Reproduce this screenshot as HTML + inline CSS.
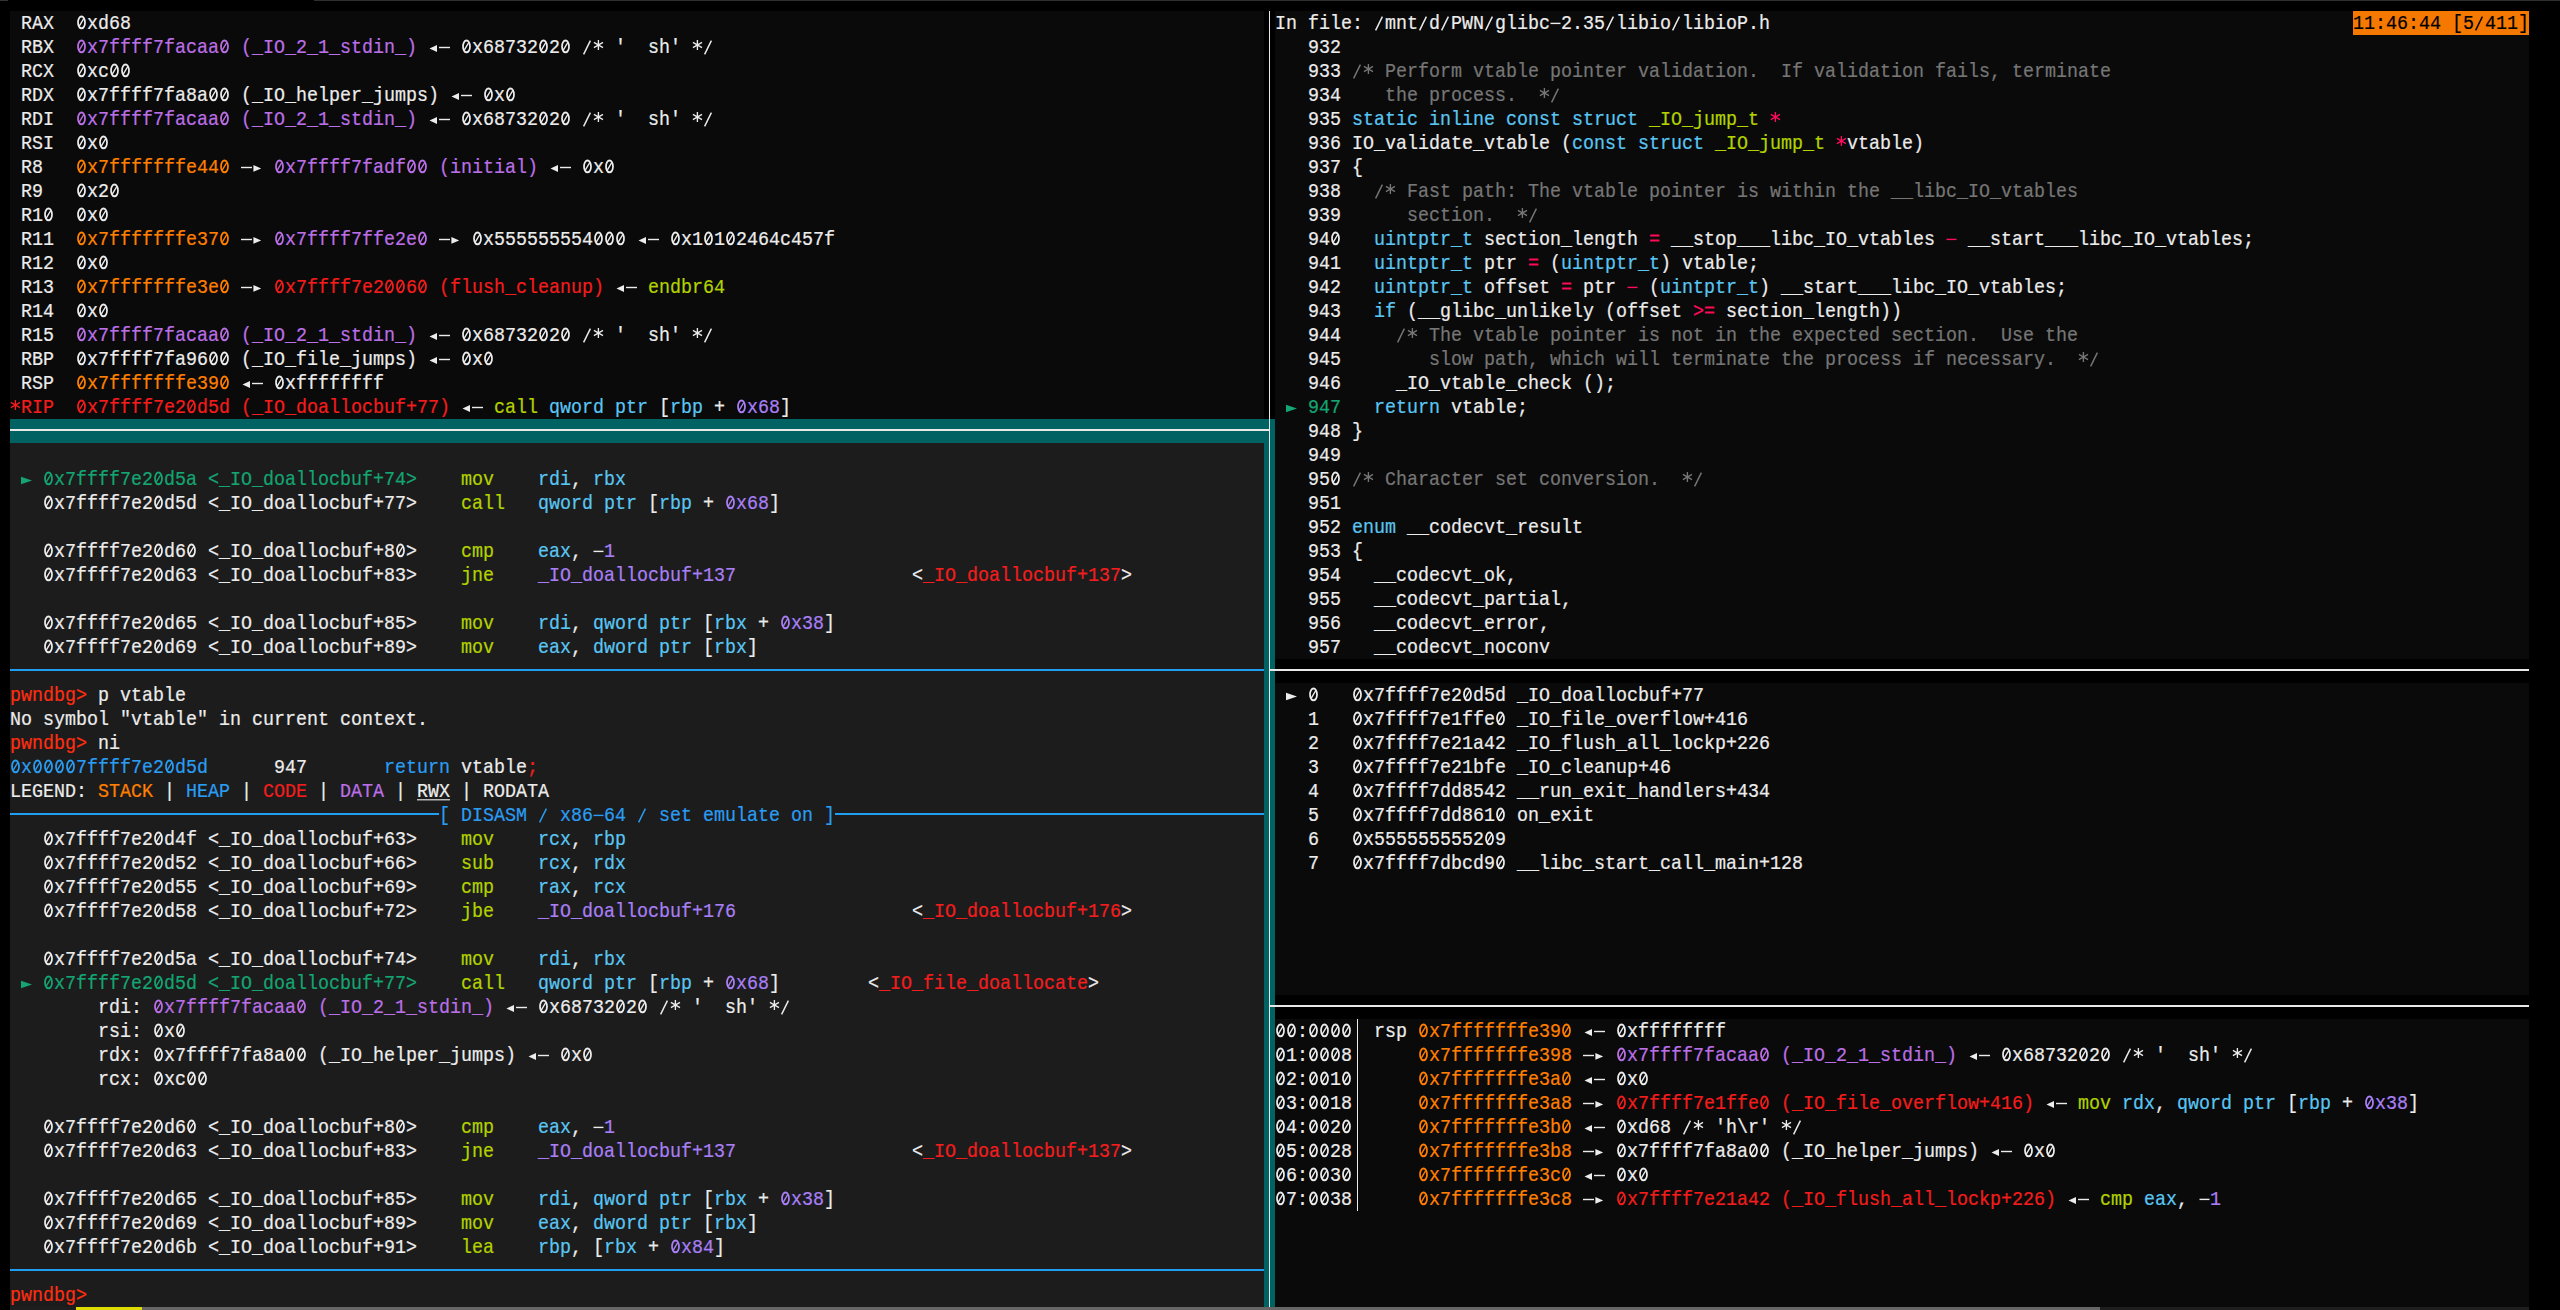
<!DOCTYPE html><html><head><meta charset="utf-8"><style>

*{margin:0;padding:0;box-sizing:border-box}
html,body{width:2560px;height:1310px;overflow:hidden;background:#000}
body{position:relative;font-family:"Liberation Mono",monospace;font-size:18.333px;color:#ececec;-webkit-text-stroke:0.2px currentColor}
.b{position:absolute}
.r{position:absolute;height:24px;line-height:24px;white-space:pre;transform-origin:0 16px;transform:translateY(2px) scaleY(1.12)}
.t{position:relative;top:TOPpx}
.g{display:inline-block;vertical-align:top;fill:currentColor}
.U{text-decoration:underline;text-decoration-thickness:1px;text-underline-offset:2px}
.P{color:#bb6fe6}
.N{color:#a97ff5}
.O{color:#ff7f00}
.R{color:#f41c1c}
.Y{color:#b3d200}
.C{color:#5ac6f2}
.G{color:#14a572}
.B{color:#2a9df2}
.M{color:#767676}
.K{color:#ff0a5e}
.X{color:#ff2d12}
.U{color:#ececec}
.k{color:#000000}

</style></head><body>
<div class="b" style="left:0px;top:0px;width:8px;height:1px;background:#333333;"></div>
<div class="b" style="left:314px;top:0px;width:2246px;height:1px;background:#2f2f2f;"></div>
<div class="b" style="left:10px;top:11px;width:1254px;height:408px;background:#0a0a0a;"></div>
<div class="b" style="left:10px;top:419px;width:1265px;height:24px;background:#006262;"></div>
<div class="b" style="left:1264px;top:419px;width:11px;height:888px;background:#006262;"></div>
<div class="b" style="left:10px;top:443px;width:1254px;height:864px;background:#1c1c1c;"></div>
<div class="b" style="left:1275px;top:11px;width:1254px;height:648px;background:#0a0a0a;"></div>
<div class="b" style="left:1275px;top:683px;width:1254px;height:312px;background:#0a0a0a;"></div>
<div class="b" style="left:1275px;top:1019px;width:1254px;height:288px;background:#0a0a0a;"></div>
<div class="b" style="left:1269px;top:11px;width:1px;height:1296px;background:#e8e8e8;"></div>
<div class="b" style="left:10px;top:429px;width:1260px;height:2px;background:#e8e8e8;"></div>
<div class="b" style="left:1269px;top:669px;width:1260px;height:2px;background:#e8e8e8;"></div>
<div class="b" style="left:1269px;top:1005px;width:1260px;height:2px;background:#e8e8e8;"></div>
<div class="b" style="left:10px;top:669px;width:1254px;height:2px;background:#1f9ff2;"></div>
<div class="b" style="left:10px;top:1269px;width:1254px;height:2px;background:#1f9ff2;"></div>
<div class="b" style="left:10px;top:813px;width:429px;height:2px;background:#1f9ff2;"></div>
<div class="b" style="left:835px;top:813px;width:429px;height:2px;background:#1f9ff2;"></div>
<div class="b" style="left:2353px;top:11px;width:176px;height:24px;background:#f57900;"></div>
<div class="b" style="left:10px;top:1307px;width:66px;height:3px;background:#1e1e1e;"></div>
<div class="b" style="left:76px;top:1307px;width:66px;height:3px;background:#dcdc00;"></div>
<div class="b" style="left:142px;top:1307px;width:1958px;height:3px;background:#666666;"></div>
<div class="b" style="left:2100px;top:1307px;width:429px;height:3px;background:#1e1e1e;"></div>
<div class="r" style="left:10px;top:11px"> RAX  <svg class="g" width="11" height="24" viewBox="0 0 11 24"><ellipse cx="5.5" cy="10.107" rx="3.5" ry="5.312" stroke="currentColor" stroke-width="1.75" fill="none"/><path d="M3.3,13.321 L7.9,6.536" stroke="currentColor" stroke-width="1.3" fill="none"/></svg>xd68</div>
<div class="r" style="left:10px;top:35px"> RBX  <span class="P"><svg class="g" width="11" height="24" viewBox="0 0 11 24"><ellipse cx="5.5" cy="10.107" rx="3.5" ry="5.312" stroke="currentColor" stroke-width="1.75" fill="none"/><path d="M3.3,13.321 L7.9,6.536" stroke="currentColor" stroke-width="1.3" fill="none"/></svg>x7ffff7facaa<svg class="g" width="11" height="24" viewBox="0 0 11 24"><ellipse cx="5.5" cy="10.107" rx="3.5" ry="5.312" stroke="currentColor" stroke-width="1.75" fill="none"/><path d="M3.3,13.321 L7.9,6.536" stroke="currentColor" stroke-width="1.3" fill="none"/></svg> (_IO_2_1_stdin_)</span> <svg class="g" width="11" height="24" viewBox="0 0 11 24"><polygon points="1.5,11.982 9,8.857 9,15.107"/></svg><svg class="g" width="11" height="24" viewBox="0 0 11 24"><rect x="0" y="10.464" width="11" height="1.25"/></svg> <svg class="g" width="11" height="24" viewBox="0 0 11 24"><ellipse cx="5.5" cy="10.107" rx="3.5" ry="5.312" stroke="currentColor" stroke-width="1.75" fill="none"/><path d="M3.3,13.321 L7.9,6.536" stroke="currentColor" stroke-width="1.3" fill="none"/></svg>x68732<svg class="g" width="11" height="24" viewBox="0 0 11 24"><ellipse cx="5.5" cy="10.107" rx="3.5" ry="5.312" stroke="currentColor" stroke-width="1.75" fill="none"/><path d="M3.3,13.321 L7.9,6.536" stroke="currentColor" stroke-width="1.3" fill="none"/></svg>2<svg class="g" width="11" height="24" viewBox="0 0 11 24"><ellipse cx="5.5" cy="10.107" rx="3.5" ry="5.312" stroke="currentColor" stroke-width="1.75" fill="none"/><path d="M3.3,13.321 L7.9,6.536" stroke="currentColor" stroke-width="1.3" fill="none"/></svg> <svg class="g" width="11" height="24" viewBox="0 0 11 24"><path d="M1.6,17.25 L8.4,4.929" stroke="currentColor" stroke-width="1.5" fill="none"/></svg><svg class="g" width="11" height="24" viewBox="0 0 11 24"><path d="M5.4,4.393 V13.321 M0.9,6.446 L10,11.179 M0.9,11.179 L10,6.446" stroke="currentColor" stroke-width="1.35" fill="none"/></svg> '  sh' <svg class="g" width="11" height="24" viewBox="0 0 11 24"><path d="M5.4,4.393 V13.321 M0.9,6.446 L10,11.179 M0.9,11.179 L10,6.446" stroke="currentColor" stroke-width="1.35" fill="none"/></svg><svg class="g" width="11" height="24" viewBox="0 0 11 24"><path d="M1.6,17.25 L8.4,4.929" stroke="currentColor" stroke-width="1.5" fill="none"/></svg></div>
<div class="r" style="left:10px;top:59px"> RCX  <svg class="g" width="11" height="24" viewBox="0 0 11 24"><ellipse cx="5.5" cy="10.107" rx="3.5" ry="5.312" stroke="currentColor" stroke-width="1.75" fill="none"/><path d="M3.3,13.321 L7.9,6.536" stroke="currentColor" stroke-width="1.3" fill="none"/></svg>xc<svg class="g" width="11" height="24" viewBox="0 0 11 24"><ellipse cx="5.5" cy="10.107" rx="3.5" ry="5.312" stroke="currentColor" stroke-width="1.75" fill="none"/><path d="M3.3,13.321 L7.9,6.536" stroke="currentColor" stroke-width="1.3" fill="none"/></svg><svg class="g" width="11" height="24" viewBox="0 0 11 24"><ellipse cx="5.5" cy="10.107" rx="3.5" ry="5.312" stroke="currentColor" stroke-width="1.75" fill="none"/><path d="M3.3,13.321 L7.9,6.536" stroke="currentColor" stroke-width="1.3" fill="none"/></svg></div>
<div class="r" style="left:10px;top:83px"> RDX  <svg class="g" width="11" height="24" viewBox="0 0 11 24"><ellipse cx="5.5" cy="10.107" rx="3.5" ry="5.312" stroke="currentColor" stroke-width="1.75" fill="none"/><path d="M3.3,13.321 L7.9,6.536" stroke="currentColor" stroke-width="1.3" fill="none"/></svg>x7ffff7fa8a<svg class="g" width="11" height="24" viewBox="0 0 11 24"><ellipse cx="5.5" cy="10.107" rx="3.5" ry="5.312" stroke="currentColor" stroke-width="1.75" fill="none"/><path d="M3.3,13.321 L7.9,6.536" stroke="currentColor" stroke-width="1.3" fill="none"/></svg><svg class="g" width="11" height="24" viewBox="0 0 11 24"><ellipse cx="5.5" cy="10.107" rx="3.5" ry="5.312" stroke="currentColor" stroke-width="1.75" fill="none"/><path d="M3.3,13.321 L7.9,6.536" stroke="currentColor" stroke-width="1.3" fill="none"/></svg> (_IO_helper_jumps) <svg class="g" width="11" height="24" viewBox="0 0 11 24"><polygon points="1.5,11.982 9,8.857 9,15.107"/></svg><svg class="g" width="11" height="24" viewBox="0 0 11 24"><rect x="0" y="10.464" width="11" height="1.25"/></svg> <svg class="g" width="11" height="24" viewBox="0 0 11 24"><ellipse cx="5.5" cy="10.107" rx="3.5" ry="5.312" stroke="currentColor" stroke-width="1.75" fill="none"/><path d="M3.3,13.321 L7.9,6.536" stroke="currentColor" stroke-width="1.3" fill="none"/></svg>x<svg class="g" width="11" height="24" viewBox="0 0 11 24"><ellipse cx="5.5" cy="10.107" rx="3.5" ry="5.312" stroke="currentColor" stroke-width="1.75" fill="none"/><path d="M3.3,13.321 L7.9,6.536" stroke="currentColor" stroke-width="1.3" fill="none"/></svg></div>
<div class="r" style="left:10px;top:107px"> RDI  <span class="P"><svg class="g" width="11" height="24" viewBox="0 0 11 24"><ellipse cx="5.5" cy="10.107" rx="3.5" ry="5.312" stroke="currentColor" stroke-width="1.75" fill="none"/><path d="M3.3,13.321 L7.9,6.536" stroke="currentColor" stroke-width="1.3" fill="none"/></svg>x7ffff7facaa<svg class="g" width="11" height="24" viewBox="0 0 11 24"><ellipse cx="5.5" cy="10.107" rx="3.5" ry="5.312" stroke="currentColor" stroke-width="1.75" fill="none"/><path d="M3.3,13.321 L7.9,6.536" stroke="currentColor" stroke-width="1.3" fill="none"/></svg> (_IO_2_1_stdin_)</span> <svg class="g" width="11" height="24" viewBox="0 0 11 24"><polygon points="1.5,11.982 9,8.857 9,15.107"/></svg><svg class="g" width="11" height="24" viewBox="0 0 11 24"><rect x="0" y="10.464" width="11" height="1.25"/></svg> <svg class="g" width="11" height="24" viewBox="0 0 11 24"><ellipse cx="5.5" cy="10.107" rx="3.5" ry="5.312" stroke="currentColor" stroke-width="1.75" fill="none"/><path d="M3.3,13.321 L7.9,6.536" stroke="currentColor" stroke-width="1.3" fill="none"/></svg>x68732<svg class="g" width="11" height="24" viewBox="0 0 11 24"><ellipse cx="5.5" cy="10.107" rx="3.5" ry="5.312" stroke="currentColor" stroke-width="1.75" fill="none"/><path d="M3.3,13.321 L7.9,6.536" stroke="currentColor" stroke-width="1.3" fill="none"/></svg>2<svg class="g" width="11" height="24" viewBox="0 0 11 24"><ellipse cx="5.5" cy="10.107" rx="3.5" ry="5.312" stroke="currentColor" stroke-width="1.75" fill="none"/><path d="M3.3,13.321 L7.9,6.536" stroke="currentColor" stroke-width="1.3" fill="none"/></svg> <svg class="g" width="11" height="24" viewBox="0 0 11 24"><path d="M1.6,17.25 L8.4,4.929" stroke="currentColor" stroke-width="1.5" fill="none"/></svg><svg class="g" width="11" height="24" viewBox="0 0 11 24"><path d="M5.4,4.393 V13.321 M0.9,6.446 L10,11.179 M0.9,11.179 L10,6.446" stroke="currentColor" stroke-width="1.35" fill="none"/></svg> '  sh' <svg class="g" width="11" height="24" viewBox="0 0 11 24"><path d="M5.4,4.393 V13.321 M0.9,6.446 L10,11.179 M0.9,11.179 L10,6.446" stroke="currentColor" stroke-width="1.35" fill="none"/></svg><svg class="g" width="11" height="24" viewBox="0 0 11 24"><path d="M1.6,17.25 L8.4,4.929" stroke="currentColor" stroke-width="1.5" fill="none"/></svg></div>
<div class="r" style="left:10px;top:131px"> RSI  <svg class="g" width="11" height="24" viewBox="0 0 11 24"><ellipse cx="5.5" cy="10.107" rx="3.5" ry="5.312" stroke="currentColor" stroke-width="1.75" fill="none"/><path d="M3.3,13.321 L7.9,6.536" stroke="currentColor" stroke-width="1.3" fill="none"/></svg>x<svg class="g" width="11" height="24" viewBox="0 0 11 24"><ellipse cx="5.5" cy="10.107" rx="3.5" ry="5.312" stroke="currentColor" stroke-width="1.75" fill="none"/><path d="M3.3,13.321 L7.9,6.536" stroke="currentColor" stroke-width="1.3" fill="none"/></svg></div>
<div class="r" style="left:10px;top:155px"> R8   <span class="O"><svg class="g" width="11" height="24" viewBox="0 0 11 24"><ellipse cx="5.5" cy="10.107" rx="3.5" ry="5.312" stroke="currentColor" stroke-width="1.75" fill="none"/><path d="M3.3,13.321 L7.9,6.536" stroke="currentColor" stroke-width="1.3" fill="none"/></svg>x7fffffffe44<svg class="g" width="11" height="24" viewBox="0 0 11 24"><ellipse cx="5.5" cy="10.107" rx="3.5" ry="5.312" stroke="currentColor" stroke-width="1.75" fill="none"/><path d="M3.3,13.321 L7.9,6.536" stroke="currentColor" stroke-width="1.3" fill="none"/></svg></span> <svg class="g" width="11" height="24" viewBox="0 0 11 24"><rect x="0" y="10.464" width="11" height="1.25"/></svg><svg class="g" width="11" height="24" viewBox="0 0 11 24"><polygon points="1.4,8.857 9.2,11.893 1.4,14.929"/></svg> <span class="P"><svg class="g" width="11" height="24" viewBox="0 0 11 24"><ellipse cx="5.5" cy="10.107" rx="3.5" ry="5.312" stroke="currentColor" stroke-width="1.75" fill="none"/><path d="M3.3,13.321 L7.9,6.536" stroke="currentColor" stroke-width="1.3" fill="none"/></svg>x7ffff7fadf<svg class="g" width="11" height="24" viewBox="0 0 11 24"><ellipse cx="5.5" cy="10.107" rx="3.5" ry="5.312" stroke="currentColor" stroke-width="1.75" fill="none"/><path d="M3.3,13.321 L7.9,6.536" stroke="currentColor" stroke-width="1.3" fill="none"/></svg><svg class="g" width="11" height="24" viewBox="0 0 11 24"><ellipse cx="5.5" cy="10.107" rx="3.5" ry="5.312" stroke="currentColor" stroke-width="1.75" fill="none"/><path d="M3.3,13.321 L7.9,6.536" stroke="currentColor" stroke-width="1.3" fill="none"/></svg> (initial)</span> <svg class="g" width="11" height="24" viewBox="0 0 11 24"><polygon points="1.5,11.982 9,8.857 9,15.107"/></svg><svg class="g" width="11" height="24" viewBox="0 0 11 24"><rect x="0" y="10.464" width="11" height="1.25"/></svg> <svg class="g" width="11" height="24" viewBox="0 0 11 24"><ellipse cx="5.5" cy="10.107" rx="3.5" ry="5.312" stroke="currentColor" stroke-width="1.75" fill="none"/><path d="M3.3,13.321 L7.9,6.536" stroke="currentColor" stroke-width="1.3" fill="none"/></svg>x<svg class="g" width="11" height="24" viewBox="0 0 11 24"><ellipse cx="5.5" cy="10.107" rx="3.5" ry="5.312" stroke="currentColor" stroke-width="1.75" fill="none"/><path d="M3.3,13.321 L7.9,6.536" stroke="currentColor" stroke-width="1.3" fill="none"/></svg></div>
<div class="r" style="left:10px;top:179px"> R9   <svg class="g" width="11" height="24" viewBox="0 0 11 24"><ellipse cx="5.5" cy="10.107" rx="3.5" ry="5.312" stroke="currentColor" stroke-width="1.75" fill="none"/><path d="M3.3,13.321 L7.9,6.536" stroke="currentColor" stroke-width="1.3" fill="none"/></svg>x2<svg class="g" width="11" height="24" viewBox="0 0 11 24"><ellipse cx="5.5" cy="10.107" rx="3.5" ry="5.312" stroke="currentColor" stroke-width="1.75" fill="none"/><path d="M3.3,13.321 L7.9,6.536" stroke="currentColor" stroke-width="1.3" fill="none"/></svg></div>
<div class="r" style="left:10px;top:203px"> R1<svg class="g" width="11" height="24" viewBox="0 0 11 24"><ellipse cx="5.5" cy="10.107" rx="3.5" ry="5.312" stroke="currentColor" stroke-width="1.75" fill="none"/><path d="M3.3,13.321 L7.9,6.536" stroke="currentColor" stroke-width="1.3" fill="none"/></svg>  <svg class="g" width="11" height="24" viewBox="0 0 11 24"><ellipse cx="5.5" cy="10.107" rx="3.5" ry="5.312" stroke="currentColor" stroke-width="1.75" fill="none"/><path d="M3.3,13.321 L7.9,6.536" stroke="currentColor" stroke-width="1.3" fill="none"/></svg>x<svg class="g" width="11" height="24" viewBox="0 0 11 24"><ellipse cx="5.5" cy="10.107" rx="3.5" ry="5.312" stroke="currentColor" stroke-width="1.75" fill="none"/><path d="M3.3,13.321 L7.9,6.536" stroke="currentColor" stroke-width="1.3" fill="none"/></svg></div>
<div class="r" style="left:10px;top:227px"> R11  <span class="O"><svg class="g" width="11" height="24" viewBox="0 0 11 24"><ellipse cx="5.5" cy="10.107" rx="3.5" ry="5.312" stroke="currentColor" stroke-width="1.75" fill="none"/><path d="M3.3,13.321 L7.9,6.536" stroke="currentColor" stroke-width="1.3" fill="none"/></svg>x7fffffffe37<svg class="g" width="11" height="24" viewBox="0 0 11 24"><ellipse cx="5.5" cy="10.107" rx="3.5" ry="5.312" stroke="currentColor" stroke-width="1.75" fill="none"/><path d="M3.3,13.321 L7.9,6.536" stroke="currentColor" stroke-width="1.3" fill="none"/></svg></span> <svg class="g" width="11" height="24" viewBox="0 0 11 24"><rect x="0" y="10.464" width="11" height="1.25"/></svg><svg class="g" width="11" height="24" viewBox="0 0 11 24"><polygon points="1.4,8.857 9.2,11.893 1.4,14.929"/></svg> <span class="P"><svg class="g" width="11" height="24" viewBox="0 0 11 24"><ellipse cx="5.5" cy="10.107" rx="3.5" ry="5.312" stroke="currentColor" stroke-width="1.75" fill="none"/><path d="M3.3,13.321 L7.9,6.536" stroke="currentColor" stroke-width="1.3" fill="none"/></svg>x7ffff7ffe2e<svg class="g" width="11" height="24" viewBox="0 0 11 24"><ellipse cx="5.5" cy="10.107" rx="3.5" ry="5.312" stroke="currentColor" stroke-width="1.75" fill="none"/><path d="M3.3,13.321 L7.9,6.536" stroke="currentColor" stroke-width="1.3" fill="none"/></svg></span> <svg class="g" width="11" height="24" viewBox="0 0 11 24"><rect x="0" y="10.464" width="11" height="1.25"/></svg><svg class="g" width="11" height="24" viewBox="0 0 11 24"><polygon points="1.4,8.857 9.2,11.893 1.4,14.929"/></svg> <svg class="g" width="11" height="24" viewBox="0 0 11 24"><ellipse cx="5.5" cy="10.107" rx="3.5" ry="5.312" stroke="currentColor" stroke-width="1.75" fill="none"/><path d="M3.3,13.321 L7.9,6.536" stroke="currentColor" stroke-width="1.3" fill="none"/></svg>x555555554<svg class="g" width="11" height="24" viewBox="0 0 11 24"><ellipse cx="5.5" cy="10.107" rx="3.5" ry="5.312" stroke="currentColor" stroke-width="1.75" fill="none"/><path d="M3.3,13.321 L7.9,6.536" stroke="currentColor" stroke-width="1.3" fill="none"/></svg><svg class="g" width="11" height="24" viewBox="0 0 11 24"><ellipse cx="5.5" cy="10.107" rx="3.5" ry="5.312" stroke="currentColor" stroke-width="1.75" fill="none"/><path d="M3.3,13.321 L7.9,6.536" stroke="currentColor" stroke-width="1.3" fill="none"/></svg><svg class="g" width="11" height="24" viewBox="0 0 11 24"><ellipse cx="5.5" cy="10.107" rx="3.5" ry="5.312" stroke="currentColor" stroke-width="1.75" fill="none"/><path d="M3.3,13.321 L7.9,6.536" stroke="currentColor" stroke-width="1.3" fill="none"/></svg> <svg class="g" width="11" height="24" viewBox="0 0 11 24"><polygon points="1.5,11.982 9,8.857 9,15.107"/></svg><svg class="g" width="11" height="24" viewBox="0 0 11 24"><rect x="0" y="10.464" width="11" height="1.25"/></svg> <svg class="g" width="11" height="24" viewBox="0 0 11 24"><ellipse cx="5.5" cy="10.107" rx="3.5" ry="5.312" stroke="currentColor" stroke-width="1.75" fill="none"/><path d="M3.3,13.321 L7.9,6.536" stroke="currentColor" stroke-width="1.3" fill="none"/></svg>x1<svg class="g" width="11" height="24" viewBox="0 0 11 24"><ellipse cx="5.5" cy="10.107" rx="3.5" ry="5.312" stroke="currentColor" stroke-width="1.75" fill="none"/><path d="M3.3,13.321 L7.9,6.536" stroke="currentColor" stroke-width="1.3" fill="none"/></svg>1<svg class="g" width="11" height="24" viewBox="0 0 11 24"><ellipse cx="5.5" cy="10.107" rx="3.5" ry="5.312" stroke="currentColor" stroke-width="1.75" fill="none"/><path d="M3.3,13.321 L7.9,6.536" stroke="currentColor" stroke-width="1.3" fill="none"/></svg>2464c457f</div>
<div class="r" style="left:10px;top:251px"> R12  <svg class="g" width="11" height="24" viewBox="0 0 11 24"><ellipse cx="5.5" cy="10.107" rx="3.5" ry="5.312" stroke="currentColor" stroke-width="1.75" fill="none"/><path d="M3.3,13.321 L7.9,6.536" stroke="currentColor" stroke-width="1.3" fill="none"/></svg>x<svg class="g" width="11" height="24" viewBox="0 0 11 24"><ellipse cx="5.5" cy="10.107" rx="3.5" ry="5.312" stroke="currentColor" stroke-width="1.75" fill="none"/><path d="M3.3,13.321 L7.9,6.536" stroke="currentColor" stroke-width="1.3" fill="none"/></svg></div>
<div class="r" style="left:10px;top:275px"> R13  <span class="O"><svg class="g" width="11" height="24" viewBox="0 0 11 24"><ellipse cx="5.5" cy="10.107" rx="3.5" ry="5.312" stroke="currentColor" stroke-width="1.75" fill="none"/><path d="M3.3,13.321 L7.9,6.536" stroke="currentColor" stroke-width="1.3" fill="none"/></svg>x7fffffffe3e<svg class="g" width="11" height="24" viewBox="0 0 11 24"><ellipse cx="5.5" cy="10.107" rx="3.5" ry="5.312" stroke="currentColor" stroke-width="1.75" fill="none"/><path d="M3.3,13.321 L7.9,6.536" stroke="currentColor" stroke-width="1.3" fill="none"/></svg></span> <svg class="g" width="11" height="24" viewBox="0 0 11 24"><rect x="0" y="10.464" width="11" height="1.25"/></svg><svg class="g" width="11" height="24" viewBox="0 0 11 24"><polygon points="1.4,8.857 9.2,11.893 1.4,14.929"/></svg> <span class="R"><svg class="g" width="11" height="24" viewBox="0 0 11 24"><ellipse cx="5.5" cy="10.107" rx="3.5" ry="5.312" stroke="currentColor" stroke-width="1.75" fill="none"/><path d="M3.3,13.321 L7.9,6.536" stroke="currentColor" stroke-width="1.3" fill="none"/></svg>x7ffff7e2<svg class="g" width="11" height="24" viewBox="0 0 11 24"><ellipse cx="5.5" cy="10.107" rx="3.5" ry="5.312" stroke="currentColor" stroke-width="1.75" fill="none"/><path d="M3.3,13.321 L7.9,6.536" stroke="currentColor" stroke-width="1.3" fill="none"/></svg><svg class="g" width="11" height="24" viewBox="0 0 11 24"><ellipse cx="5.5" cy="10.107" rx="3.5" ry="5.312" stroke="currentColor" stroke-width="1.75" fill="none"/><path d="M3.3,13.321 L7.9,6.536" stroke="currentColor" stroke-width="1.3" fill="none"/></svg>6<svg class="g" width="11" height="24" viewBox="0 0 11 24"><ellipse cx="5.5" cy="10.107" rx="3.5" ry="5.312" stroke="currentColor" stroke-width="1.75" fill="none"/><path d="M3.3,13.321 L7.9,6.536" stroke="currentColor" stroke-width="1.3" fill="none"/></svg> (flush_cleanup)</span> <svg class="g" width="11" height="24" viewBox="0 0 11 24"><polygon points="1.5,11.982 9,8.857 9,15.107"/></svg><svg class="g" width="11" height="24" viewBox="0 0 11 24"><rect x="0" y="10.464" width="11" height="1.25"/></svg> <span class="Y">endbr64</span></div>
<div class="r" style="left:10px;top:299px"> R14  <svg class="g" width="11" height="24" viewBox="0 0 11 24"><ellipse cx="5.5" cy="10.107" rx="3.5" ry="5.312" stroke="currentColor" stroke-width="1.75" fill="none"/><path d="M3.3,13.321 L7.9,6.536" stroke="currentColor" stroke-width="1.3" fill="none"/></svg>x<svg class="g" width="11" height="24" viewBox="0 0 11 24"><ellipse cx="5.5" cy="10.107" rx="3.5" ry="5.312" stroke="currentColor" stroke-width="1.75" fill="none"/><path d="M3.3,13.321 L7.9,6.536" stroke="currentColor" stroke-width="1.3" fill="none"/></svg></div>
<div class="r" style="left:10px;top:323px"> R15  <span class="P"><svg class="g" width="11" height="24" viewBox="0 0 11 24"><ellipse cx="5.5" cy="10.107" rx="3.5" ry="5.312" stroke="currentColor" stroke-width="1.75" fill="none"/><path d="M3.3,13.321 L7.9,6.536" stroke="currentColor" stroke-width="1.3" fill="none"/></svg>x7ffff7facaa<svg class="g" width="11" height="24" viewBox="0 0 11 24"><ellipse cx="5.5" cy="10.107" rx="3.5" ry="5.312" stroke="currentColor" stroke-width="1.75" fill="none"/><path d="M3.3,13.321 L7.9,6.536" stroke="currentColor" stroke-width="1.3" fill="none"/></svg> (_IO_2_1_stdin_)</span> <svg class="g" width="11" height="24" viewBox="0 0 11 24"><polygon points="1.5,11.982 9,8.857 9,15.107"/></svg><svg class="g" width="11" height="24" viewBox="0 0 11 24"><rect x="0" y="10.464" width="11" height="1.25"/></svg> <svg class="g" width="11" height="24" viewBox="0 0 11 24"><ellipse cx="5.5" cy="10.107" rx="3.5" ry="5.312" stroke="currentColor" stroke-width="1.75" fill="none"/><path d="M3.3,13.321 L7.9,6.536" stroke="currentColor" stroke-width="1.3" fill="none"/></svg>x68732<svg class="g" width="11" height="24" viewBox="0 0 11 24"><ellipse cx="5.5" cy="10.107" rx="3.5" ry="5.312" stroke="currentColor" stroke-width="1.75" fill="none"/><path d="M3.3,13.321 L7.9,6.536" stroke="currentColor" stroke-width="1.3" fill="none"/></svg>2<svg class="g" width="11" height="24" viewBox="0 0 11 24"><ellipse cx="5.5" cy="10.107" rx="3.5" ry="5.312" stroke="currentColor" stroke-width="1.75" fill="none"/><path d="M3.3,13.321 L7.9,6.536" stroke="currentColor" stroke-width="1.3" fill="none"/></svg> <svg class="g" width="11" height="24" viewBox="0 0 11 24"><path d="M1.6,17.25 L8.4,4.929" stroke="currentColor" stroke-width="1.5" fill="none"/></svg><svg class="g" width="11" height="24" viewBox="0 0 11 24"><path d="M5.4,4.393 V13.321 M0.9,6.446 L10,11.179 M0.9,11.179 L10,6.446" stroke="currentColor" stroke-width="1.35" fill="none"/></svg> '  sh' <svg class="g" width="11" height="24" viewBox="0 0 11 24"><path d="M5.4,4.393 V13.321 M0.9,6.446 L10,11.179 M0.9,11.179 L10,6.446" stroke="currentColor" stroke-width="1.35" fill="none"/></svg><svg class="g" width="11" height="24" viewBox="0 0 11 24"><path d="M1.6,17.25 L8.4,4.929" stroke="currentColor" stroke-width="1.5" fill="none"/></svg></div>
<div class="r" style="left:10px;top:347px"> RBP  <svg class="g" width="11" height="24" viewBox="0 0 11 24"><ellipse cx="5.5" cy="10.107" rx="3.5" ry="5.312" stroke="currentColor" stroke-width="1.75" fill="none"/><path d="M3.3,13.321 L7.9,6.536" stroke="currentColor" stroke-width="1.3" fill="none"/></svg>x7ffff7fa96<svg class="g" width="11" height="24" viewBox="0 0 11 24"><ellipse cx="5.5" cy="10.107" rx="3.5" ry="5.312" stroke="currentColor" stroke-width="1.75" fill="none"/><path d="M3.3,13.321 L7.9,6.536" stroke="currentColor" stroke-width="1.3" fill="none"/></svg><svg class="g" width="11" height="24" viewBox="0 0 11 24"><ellipse cx="5.5" cy="10.107" rx="3.5" ry="5.312" stroke="currentColor" stroke-width="1.75" fill="none"/><path d="M3.3,13.321 L7.9,6.536" stroke="currentColor" stroke-width="1.3" fill="none"/></svg> (_IO_file_jumps) <svg class="g" width="11" height="24" viewBox="0 0 11 24"><polygon points="1.5,11.982 9,8.857 9,15.107"/></svg><svg class="g" width="11" height="24" viewBox="0 0 11 24"><rect x="0" y="10.464" width="11" height="1.25"/></svg> <svg class="g" width="11" height="24" viewBox="0 0 11 24"><ellipse cx="5.5" cy="10.107" rx="3.5" ry="5.312" stroke="currentColor" stroke-width="1.75" fill="none"/><path d="M3.3,13.321 L7.9,6.536" stroke="currentColor" stroke-width="1.3" fill="none"/></svg>x<svg class="g" width="11" height="24" viewBox="0 0 11 24"><ellipse cx="5.5" cy="10.107" rx="3.5" ry="5.312" stroke="currentColor" stroke-width="1.75" fill="none"/><path d="M3.3,13.321 L7.9,6.536" stroke="currentColor" stroke-width="1.3" fill="none"/></svg></div>
<div class="r" style="left:10px;top:371px"> RSP  <span class="O"><svg class="g" width="11" height="24" viewBox="0 0 11 24"><ellipse cx="5.5" cy="10.107" rx="3.5" ry="5.312" stroke="currentColor" stroke-width="1.75" fill="none"/><path d="M3.3,13.321 L7.9,6.536" stroke="currentColor" stroke-width="1.3" fill="none"/></svg>x7fffffffe39<svg class="g" width="11" height="24" viewBox="0 0 11 24"><ellipse cx="5.5" cy="10.107" rx="3.5" ry="5.312" stroke="currentColor" stroke-width="1.75" fill="none"/><path d="M3.3,13.321 L7.9,6.536" stroke="currentColor" stroke-width="1.3" fill="none"/></svg></span> <svg class="g" width="11" height="24" viewBox="0 0 11 24"><polygon points="1.5,11.982 9,8.857 9,15.107"/></svg><svg class="g" width="11" height="24" viewBox="0 0 11 24"><rect x="0" y="10.464" width="11" height="1.25"/></svg> <svg class="g" width="11" height="24" viewBox="0 0 11 24"><ellipse cx="5.5" cy="10.107" rx="3.5" ry="5.312" stroke="currentColor" stroke-width="1.75" fill="none"/><path d="M3.3,13.321 L7.9,6.536" stroke="currentColor" stroke-width="1.3" fill="none"/></svg>xffffffff</div>
<div class="r" style="left:10px;top:395px"><span class="R"><svg class="g" width="11" height="24" viewBox="0 0 11 24"><path d="M5.4,4.393 V13.321 M0.9,6.446 L10,11.179 M0.9,11.179 L10,6.446" stroke="currentColor" stroke-width="1.35" fill="none"/></svg>RIP</span>  <span class="R"><svg class="g" width="11" height="24" viewBox="0 0 11 24"><ellipse cx="5.5" cy="10.107" rx="3.5" ry="5.312" stroke="currentColor" stroke-width="1.75" fill="none"/><path d="M3.3,13.321 L7.9,6.536" stroke="currentColor" stroke-width="1.3" fill="none"/></svg>x7ffff7e2<svg class="g" width="11" height="24" viewBox="0 0 11 24"><ellipse cx="5.5" cy="10.107" rx="3.5" ry="5.312" stroke="currentColor" stroke-width="1.75" fill="none"/><path d="M3.3,13.321 L7.9,6.536" stroke="currentColor" stroke-width="1.3" fill="none"/></svg>d5d (_IO_doallocbuf+77)</span> <svg class="g" width="11" height="24" viewBox="0 0 11 24"><polygon points="1.5,11.982 9,8.857 9,15.107"/></svg><svg class="g" width="11" height="24" viewBox="0 0 11 24"><rect x="0" y="10.464" width="11" height="1.25"/></svg> <span class="Y">call</span> <span class="C">qword ptr</span> [<span class="C">rbp</span> + <span class="N"><svg class="g" width="11" height="24" viewBox="0 0 11 24"><ellipse cx="5.5" cy="10.107" rx="3.5" ry="5.312" stroke="currentColor" stroke-width="1.75" fill="none"/><path d="M3.3,13.321 L7.9,6.536" stroke="currentColor" stroke-width="1.3" fill="none"/></svg>x68</span>]</div>
<div class="r" style="left:10px;top:467px"> <span class="G"><svg class="g" width="11" height="24" viewBox="0 0 11 24"><polygon points="0,8.679 11,11.982 0,15.286"/></svg> <svg class="g" width="11" height="24" viewBox="0 0 11 24"><ellipse cx="5.5" cy="10.107" rx="3.5" ry="5.312" stroke="currentColor" stroke-width="1.75" fill="none"/><path d="M3.3,13.321 L7.9,6.536" stroke="currentColor" stroke-width="1.3" fill="none"/></svg>x7ffff7e2<svg class="g" width="11" height="24" viewBox="0 0 11 24"><ellipse cx="5.5" cy="10.107" rx="3.5" ry="5.312" stroke="currentColor" stroke-width="1.75" fill="none"/><path d="M3.3,13.321 L7.9,6.536" stroke="currentColor" stroke-width="1.3" fill="none"/></svg>d5a &lt;_IO_doallocbuf+74&gt;</span>    <span class="Y">mov</span>    <span class="C">rdi</span>, <span class="C">rbx</span></div>
<div class="r" style="left:10px;top:491px">   <svg class="g" width="11" height="24" viewBox="0 0 11 24"><ellipse cx="5.5" cy="10.107" rx="3.5" ry="5.312" stroke="currentColor" stroke-width="1.75" fill="none"/><path d="M3.3,13.321 L7.9,6.536" stroke="currentColor" stroke-width="1.3" fill="none"/></svg>x7ffff7e2<svg class="g" width="11" height="24" viewBox="0 0 11 24"><ellipse cx="5.5" cy="10.107" rx="3.5" ry="5.312" stroke="currentColor" stroke-width="1.75" fill="none"/><path d="M3.3,13.321 L7.9,6.536" stroke="currentColor" stroke-width="1.3" fill="none"/></svg>d5d &lt;_IO_doallocbuf+77&gt;    <span class="Y">call</span>   <span class="C">qword ptr</span> [<span class="C">rbp</span> + <span class="N"><svg class="g" width="11" height="24" viewBox="0 0 11 24"><ellipse cx="5.5" cy="10.107" rx="3.5" ry="5.312" stroke="currentColor" stroke-width="1.75" fill="none"/><path d="M3.3,13.321 L7.9,6.536" stroke="currentColor" stroke-width="1.3" fill="none"/></svg>x68</span>]</div>
<div class="r" style="left:10px;top:539px">   <svg class="g" width="11" height="24" viewBox="0 0 11 24"><ellipse cx="5.5" cy="10.107" rx="3.5" ry="5.312" stroke="currentColor" stroke-width="1.75" fill="none"/><path d="M3.3,13.321 L7.9,6.536" stroke="currentColor" stroke-width="1.3" fill="none"/></svg>x7ffff7e2<svg class="g" width="11" height="24" viewBox="0 0 11 24"><ellipse cx="5.5" cy="10.107" rx="3.5" ry="5.312" stroke="currentColor" stroke-width="1.75" fill="none"/><path d="M3.3,13.321 L7.9,6.536" stroke="currentColor" stroke-width="1.3" fill="none"/></svg>d6<svg class="g" width="11" height="24" viewBox="0 0 11 24"><ellipse cx="5.5" cy="10.107" rx="3.5" ry="5.312" stroke="currentColor" stroke-width="1.75" fill="none"/><path d="M3.3,13.321 L7.9,6.536" stroke="currentColor" stroke-width="1.3" fill="none"/></svg> &lt;_IO_doallocbuf+8<svg class="g" width="11" height="24" viewBox="0 0 11 24"><ellipse cx="5.5" cy="10.107" rx="3.5" ry="5.312" stroke="currentColor" stroke-width="1.75" fill="none"/><path d="M3.3,13.321 L7.9,6.536" stroke="currentColor" stroke-width="1.3" fill="none"/></svg>&gt;    <span class="Y">cmp</span>    <span class="C">eax</span>, <svg class="g" width="11" height="24" viewBox="0 0 11 24"><rect x="0.5" y="10.375" width="10" height="1.25"/></svg><span class="N">1</span></div>
<div class="r" style="left:10px;top:563px">   <svg class="g" width="11" height="24" viewBox="0 0 11 24"><ellipse cx="5.5" cy="10.107" rx="3.5" ry="5.312" stroke="currentColor" stroke-width="1.75" fill="none"/><path d="M3.3,13.321 L7.9,6.536" stroke="currentColor" stroke-width="1.3" fill="none"/></svg>x7ffff7e2<svg class="g" width="11" height="24" viewBox="0 0 11 24"><ellipse cx="5.5" cy="10.107" rx="3.5" ry="5.312" stroke="currentColor" stroke-width="1.75" fill="none"/><path d="M3.3,13.321 L7.9,6.536" stroke="currentColor" stroke-width="1.3" fill="none"/></svg>d63 &lt;_IO_doallocbuf+83&gt;    <span class="Y">jne</span>    <span class="N">_IO_doallocbuf+137</span>                &lt;<span class="R">_IO_doallocbuf+137</span>&gt;</div>
<div class="r" style="left:10px;top:611px">   <svg class="g" width="11" height="24" viewBox="0 0 11 24"><ellipse cx="5.5" cy="10.107" rx="3.5" ry="5.312" stroke="currentColor" stroke-width="1.75" fill="none"/><path d="M3.3,13.321 L7.9,6.536" stroke="currentColor" stroke-width="1.3" fill="none"/></svg>x7ffff7e2<svg class="g" width="11" height="24" viewBox="0 0 11 24"><ellipse cx="5.5" cy="10.107" rx="3.5" ry="5.312" stroke="currentColor" stroke-width="1.75" fill="none"/><path d="M3.3,13.321 L7.9,6.536" stroke="currentColor" stroke-width="1.3" fill="none"/></svg>d65 &lt;_IO_doallocbuf+85&gt;    <span class="Y">mov</span>    <span class="C">rdi</span>, <span class="C">qword ptr</span> [<span class="C">rbx</span> + <span class="N"><svg class="g" width="11" height="24" viewBox="0 0 11 24"><ellipse cx="5.5" cy="10.107" rx="3.5" ry="5.312" stroke="currentColor" stroke-width="1.75" fill="none"/><path d="M3.3,13.321 L7.9,6.536" stroke="currentColor" stroke-width="1.3" fill="none"/></svg>x38</span>]</div>
<div class="r" style="left:10px;top:635px">   <svg class="g" width="11" height="24" viewBox="0 0 11 24"><ellipse cx="5.5" cy="10.107" rx="3.5" ry="5.312" stroke="currentColor" stroke-width="1.75" fill="none"/><path d="M3.3,13.321 L7.9,6.536" stroke="currentColor" stroke-width="1.3" fill="none"/></svg>x7ffff7e2<svg class="g" width="11" height="24" viewBox="0 0 11 24"><ellipse cx="5.5" cy="10.107" rx="3.5" ry="5.312" stroke="currentColor" stroke-width="1.75" fill="none"/><path d="M3.3,13.321 L7.9,6.536" stroke="currentColor" stroke-width="1.3" fill="none"/></svg>d69 &lt;_IO_doallocbuf+89&gt;    <span class="Y">mov</span>    <span class="C">eax</span>, <span class="C">dword ptr</span> [<span class="C">rbx</span>]</div>
<div class="r" style="left:10px;top:683px"><span class="X">pwndbg&gt;</span> p vtable</div>
<div class="r" style="left:10px;top:707px">No symbol "vtable" in current context.</div>
<div class="r" style="left:10px;top:731px"><span class="X">pwndbg&gt;</span> ni</div>
<div class="r" style="left:10px;top:755px"><span class="B"><svg class="g" width="11" height="24" viewBox="0 0 11 24"><ellipse cx="5.5" cy="10.107" rx="3.5" ry="5.312" stroke="currentColor" stroke-width="1.75" fill="none"/><path d="M3.3,13.321 L7.9,6.536" stroke="currentColor" stroke-width="1.3" fill="none"/></svg>x<svg class="g" width="11" height="24" viewBox="0 0 11 24"><ellipse cx="5.5" cy="10.107" rx="3.5" ry="5.312" stroke="currentColor" stroke-width="1.75" fill="none"/><path d="M3.3,13.321 L7.9,6.536" stroke="currentColor" stroke-width="1.3" fill="none"/></svg><svg class="g" width="11" height="24" viewBox="0 0 11 24"><ellipse cx="5.5" cy="10.107" rx="3.5" ry="5.312" stroke="currentColor" stroke-width="1.75" fill="none"/><path d="M3.3,13.321 L7.9,6.536" stroke="currentColor" stroke-width="1.3" fill="none"/></svg><svg class="g" width="11" height="24" viewBox="0 0 11 24"><ellipse cx="5.5" cy="10.107" rx="3.5" ry="5.312" stroke="currentColor" stroke-width="1.75" fill="none"/><path d="M3.3,13.321 L7.9,6.536" stroke="currentColor" stroke-width="1.3" fill="none"/></svg><svg class="g" width="11" height="24" viewBox="0 0 11 24"><ellipse cx="5.5" cy="10.107" rx="3.5" ry="5.312" stroke="currentColor" stroke-width="1.75" fill="none"/><path d="M3.3,13.321 L7.9,6.536" stroke="currentColor" stroke-width="1.3" fill="none"/></svg>7ffff7e2<svg class="g" width="11" height="24" viewBox="0 0 11 24"><ellipse cx="5.5" cy="10.107" rx="3.5" ry="5.312" stroke="currentColor" stroke-width="1.75" fill="none"/><path d="M3.3,13.321 L7.9,6.536" stroke="currentColor" stroke-width="1.3" fill="none"/></svg>d5d</span>      947       <span class="B">return</span> vtable<span class="R">;</span></div>
<div class="r" style="left:10px;top:779px">LEGEND: <span class="O">STACK</span> | <span class="B">HEAP</span> | <span class="R">CODE</span> | <span class="P">DATA</span> | <span class="U">RWX</span> | RODATA</div>
<div class="r" style="left:439px;top:803px"><span class="B">[ DISASM <svg class="g" width="11" height="24" viewBox="0 0 11 24"><path d="M1.6,17.25 L8.4,4.929" stroke="currentColor" stroke-width="1.5" fill="none"/></svg> x86<svg class="g" width="11" height="24" viewBox="0 0 11 24"><rect x="0.5" y="10.375" width="10" height="1.25"/></svg>64 <svg class="g" width="11" height="24" viewBox="0 0 11 24"><path d="M1.6,17.25 L8.4,4.929" stroke="currentColor" stroke-width="1.5" fill="none"/></svg> set emulate on ]</span></div>
<div class="r" style="left:10px;top:827px">   <svg class="g" width="11" height="24" viewBox="0 0 11 24"><ellipse cx="5.5" cy="10.107" rx="3.5" ry="5.312" stroke="currentColor" stroke-width="1.75" fill="none"/><path d="M3.3,13.321 L7.9,6.536" stroke="currentColor" stroke-width="1.3" fill="none"/></svg>x7ffff7e2<svg class="g" width="11" height="24" viewBox="0 0 11 24"><ellipse cx="5.5" cy="10.107" rx="3.5" ry="5.312" stroke="currentColor" stroke-width="1.75" fill="none"/><path d="M3.3,13.321 L7.9,6.536" stroke="currentColor" stroke-width="1.3" fill="none"/></svg>d4f &lt;_IO_doallocbuf+63&gt;    <span class="Y">mov</span>    <span class="C">rcx</span>, <span class="C">rbp</span></div>
<div class="r" style="left:10px;top:851px">   <svg class="g" width="11" height="24" viewBox="0 0 11 24"><ellipse cx="5.5" cy="10.107" rx="3.5" ry="5.312" stroke="currentColor" stroke-width="1.75" fill="none"/><path d="M3.3,13.321 L7.9,6.536" stroke="currentColor" stroke-width="1.3" fill="none"/></svg>x7ffff7e2<svg class="g" width="11" height="24" viewBox="0 0 11 24"><ellipse cx="5.5" cy="10.107" rx="3.5" ry="5.312" stroke="currentColor" stroke-width="1.75" fill="none"/><path d="M3.3,13.321 L7.9,6.536" stroke="currentColor" stroke-width="1.3" fill="none"/></svg>d52 &lt;_IO_doallocbuf+66&gt;    <span class="Y">sub</span>    <span class="C">rcx</span>, <span class="C">rdx</span></div>
<div class="r" style="left:10px;top:875px">   <svg class="g" width="11" height="24" viewBox="0 0 11 24"><ellipse cx="5.5" cy="10.107" rx="3.5" ry="5.312" stroke="currentColor" stroke-width="1.75" fill="none"/><path d="M3.3,13.321 L7.9,6.536" stroke="currentColor" stroke-width="1.3" fill="none"/></svg>x7ffff7e2<svg class="g" width="11" height="24" viewBox="0 0 11 24"><ellipse cx="5.5" cy="10.107" rx="3.5" ry="5.312" stroke="currentColor" stroke-width="1.75" fill="none"/><path d="M3.3,13.321 L7.9,6.536" stroke="currentColor" stroke-width="1.3" fill="none"/></svg>d55 &lt;_IO_doallocbuf+69&gt;    <span class="Y">cmp</span>    <span class="C">rax</span>, <span class="C">rcx</span></div>
<div class="r" style="left:10px;top:899px">   <svg class="g" width="11" height="24" viewBox="0 0 11 24"><ellipse cx="5.5" cy="10.107" rx="3.5" ry="5.312" stroke="currentColor" stroke-width="1.75" fill="none"/><path d="M3.3,13.321 L7.9,6.536" stroke="currentColor" stroke-width="1.3" fill="none"/></svg>x7ffff7e2<svg class="g" width="11" height="24" viewBox="0 0 11 24"><ellipse cx="5.5" cy="10.107" rx="3.5" ry="5.312" stroke="currentColor" stroke-width="1.75" fill="none"/><path d="M3.3,13.321 L7.9,6.536" stroke="currentColor" stroke-width="1.3" fill="none"/></svg>d58 &lt;_IO_doallocbuf+72&gt;    <span class="Y">jbe</span>    <span class="N">_IO_doallocbuf+176</span>                &lt;<span class="R">_IO_doallocbuf+176</span>&gt;</div>
<div class="r" style="left:10px;top:947px">   <svg class="g" width="11" height="24" viewBox="0 0 11 24"><ellipse cx="5.5" cy="10.107" rx="3.5" ry="5.312" stroke="currentColor" stroke-width="1.75" fill="none"/><path d="M3.3,13.321 L7.9,6.536" stroke="currentColor" stroke-width="1.3" fill="none"/></svg>x7ffff7e2<svg class="g" width="11" height="24" viewBox="0 0 11 24"><ellipse cx="5.5" cy="10.107" rx="3.5" ry="5.312" stroke="currentColor" stroke-width="1.75" fill="none"/><path d="M3.3,13.321 L7.9,6.536" stroke="currentColor" stroke-width="1.3" fill="none"/></svg>d5a &lt;_IO_doallocbuf+74&gt;    <span class="Y">mov</span>    <span class="C">rdi</span>, <span class="C">rbx</span></div>
<div class="r" style="left:10px;top:971px"> <span class="G"><svg class="g" width="11" height="24" viewBox="0 0 11 24"><polygon points="0,8.679 11,11.982 0,15.286"/></svg> <svg class="g" width="11" height="24" viewBox="0 0 11 24"><ellipse cx="5.5" cy="10.107" rx="3.5" ry="5.312" stroke="currentColor" stroke-width="1.75" fill="none"/><path d="M3.3,13.321 L7.9,6.536" stroke="currentColor" stroke-width="1.3" fill="none"/></svg>x7ffff7e2<svg class="g" width="11" height="24" viewBox="0 0 11 24"><ellipse cx="5.5" cy="10.107" rx="3.5" ry="5.312" stroke="currentColor" stroke-width="1.75" fill="none"/><path d="M3.3,13.321 L7.9,6.536" stroke="currentColor" stroke-width="1.3" fill="none"/></svg>d5d &lt;_IO_doallocbuf+77&gt;</span>    <span class="Y">call</span>   <span class="C">qword ptr</span> [<span class="C">rbp</span> + <span class="N"><svg class="g" width="11" height="24" viewBox="0 0 11 24"><ellipse cx="5.5" cy="10.107" rx="3.5" ry="5.312" stroke="currentColor" stroke-width="1.75" fill="none"/><path d="M3.3,13.321 L7.9,6.536" stroke="currentColor" stroke-width="1.3" fill="none"/></svg>x68</span>]        &lt;<span class="R">_IO_file_doallocate</span>&gt;</div>
<div class="r" style="left:10px;top:995px">        rdi: <span class="P"><svg class="g" width="11" height="24" viewBox="0 0 11 24"><ellipse cx="5.5" cy="10.107" rx="3.5" ry="5.312" stroke="currentColor" stroke-width="1.75" fill="none"/><path d="M3.3,13.321 L7.9,6.536" stroke="currentColor" stroke-width="1.3" fill="none"/></svg>x7ffff7facaa<svg class="g" width="11" height="24" viewBox="0 0 11 24"><ellipse cx="5.5" cy="10.107" rx="3.5" ry="5.312" stroke="currentColor" stroke-width="1.75" fill="none"/><path d="M3.3,13.321 L7.9,6.536" stroke="currentColor" stroke-width="1.3" fill="none"/></svg> (_IO_2_1_stdin_)</span> <svg class="g" width="11" height="24" viewBox="0 0 11 24"><polygon points="1.5,11.982 9,8.857 9,15.107"/></svg><svg class="g" width="11" height="24" viewBox="0 0 11 24"><rect x="0" y="10.464" width="11" height="1.25"/></svg> <svg class="g" width="11" height="24" viewBox="0 0 11 24"><ellipse cx="5.5" cy="10.107" rx="3.5" ry="5.312" stroke="currentColor" stroke-width="1.75" fill="none"/><path d="M3.3,13.321 L7.9,6.536" stroke="currentColor" stroke-width="1.3" fill="none"/></svg>x68732<svg class="g" width="11" height="24" viewBox="0 0 11 24"><ellipse cx="5.5" cy="10.107" rx="3.5" ry="5.312" stroke="currentColor" stroke-width="1.75" fill="none"/><path d="M3.3,13.321 L7.9,6.536" stroke="currentColor" stroke-width="1.3" fill="none"/></svg>2<svg class="g" width="11" height="24" viewBox="0 0 11 24"><ellipse cx="5.5" cy="10.107" rx="3.5" ry="5.312" stroke="currentColor" stroke-width="1.75" fill="none"/><path d="M3.3,13.321 L7.9,6.536" stroke="currentColor" stroke-width="1.3" fill="none"/></svg> <svg class="g" width="11" height="24" viewBox="0 0 11 24"><path d="M1.6,17.25 L8.4,4.929" stroke="currentColor" stroke-width="1.5" fill="none"/></svg><svg class="g" width="11" height="24" viewBox="0 0 11 24"><path d="M5.4,4.393 V13.321 M0.9,6.446 L10,11.179 M0.9,11.179 L10,6.446" stroke="currentColor" stroke-width="1.35" fill="none"/></svg> '  sh' <svg class="g" width="11" height="24" viewBox="0 0 11 24"><path d="M5.4,4.393 V13.321 M0.9,6.446 L10,11.179 M0.9,11.179 L10,6.446" stroke="currentColor" stroke-width="1.35" fill="none"/></svg><svg class="g" width="11" height="24" viewBox="0 0 11 24"><path d="M1.6,17.25 L8.4,4.929" stroke="currentColor" stroke-width="1.5" fill="none"/></svg></div>
<div class="r" style="left:10px;top:1019px">        rsi: <svg class="g" width="11" height="24" viewBox="0 0 11 24"><ellipse cx="5.5" cy="10.107" rx="3.5" ry="5.312" stroke="currentColor" stroke-width="1.75" fill="none"/><path d="M3.3,13.321 L7.9,6.536" stroke="currentColor" stroke-width="1.3" fill="none"/></svg>x<svg class="g" width="11" height="24" viewBox="0 0 11 24"><ellipse cx="5.5" cy="10.107" rx="3.5" ry="5.312" stroke="currentColor" stroke-width="1.75" fill="none"/><path d="M3.3,13.321 L7.9,6.536" stroke="currentColor" stroke-width="1.3" fill="none"/></svg></div>
<div class="r" style="left:10px;top:1043px">        rdx: <svg class="g" width="11" height="24" viewBox="0 0 11 24"><ellipse cx="5.5" cy="10.107" rx="3.5" ry="5.312" stroke="currentColor" stroke-width="1.75" fill="none"/><path d="M3.3,13.321 L7.9,6.536" stroke="currentColor" stroke-width="1.3" fill="none"/></svg>x7ffff7fa8a<svg class="g" width="11" height="24" viewBox="0 0 11 24"><ellipse cx="5.5" cy="10.107" rx="3.5" ry="5.312" stroke="currentColor" stroke-width="1.75" fill="none"/><path d="M3.3,13.321 L7.9,6.536" stroke="currentColor" stroke-width="1.3" fill="none"/></svg><svg class="g" width="11" height="24" viewBox="0 0 11 24"><ellipse cx="5.5" cy="10.107" rx="3.5" ry="5.312" stroke="currentColor" stroke-width="1.75" fill="none"/><path d="M3.3,13.321 L7.9,6.536" stroke="currentColor" stroke-width="1.3" fill="none"/></svg> (_IO_helper_jumps) <svg class="g" width="11" height="24" viewBox="0 0 11 24"><polygon points="1.5,11.982 9,8.857 9,15.107"/></svg><svg class="g" width="11" height="24" viewBox="0 0 11 24"><rect x="0" y="10.464" width="11" height="1.25"/></svg> <svg class="g" width="11" height="24" viewBox="0 0 11 24"><ellipse cx="5.5" cy="10.107" rx="3.5" ry="5.312" stroke="currentColor" stroke-width="1.75" fill="none"/><path d="M3.3,13.321 L7.9,6.536" stroke="currentColor" stroke-width="1.3" fill="none"/></svg>x<svg class="g" width="11" height="24" viewBox="0 0 11 24"><ellipse cx="5.5" cy="10.107" rx="3.5" ry="5.312" stroke="currentColor" stroke-width="1.75" fill="none"/><path d="M3.3,13.321 L7.9,6.536" stroke="currentColor" stroke-width="1.3" fill="none"/></svg></div>
<div class="r" style="left:10px;top:1067px">        rcx: <svg class="g" width="11" height="24" viewBox="0 0 11 24"><ellipse cx="5.5" cy="10.107" rx="3.5" ry="5.312" stroke="currentColor" stroke-width="1.75" fill="none"/><path d="M3.3,13.321 L7.9,6.536" stroke="currentColor" stroke-width="1.3" fill="none"/></svg>xc<svg class="g" width="11" height="24" viewBox="0 0 11 24"><ellipse cx="5.5" cy="10.107" rx="3.5" ry="5.312" stroke="currentColor" stroke-width="1.75" fill="none"/><path d="M3.3,13.321 L7.9,6.536" stroke="currentColor" stroke-width="1.3" fill="none"/></svg><svg class="g" width="11" height="24" viewBox="0 0 11 24"><ellipse cx="5.5" cy="10.107" rx="3.5" ry="5.312" stroke="currentColor" stroke-width="1.75" fill="none"/><path d="M3.3,13.321 L7.9,6.536" stroke="currentColor" stroke-width="1.3" fill="none"/></svg></div>
<div class="r" style="left:10px;top:1115px">   <svg class="g" width="11" height="24" viewBox="0 0 11 24"><ellipse cx="5.5" cy="10.107" rx="3.5" ry="5.312" stroke="currentColor" stroke-width="1.75" fill="none"/><path d="M3.3,13.321 L7.9,6.536" stroke="currentColor" stroke-width="1.3" fill="none"/></svg>x7ffff7e2<svg class="g" width="11" height="24" viewBox="0 0 11 24"><ellipse cx="5.5" cy="10.107" rx="3.5" ry="5.312" stroke="currentColor" stroke-width="1.75" fill="none"/><path d="M3.3,13.321 L7.9,6.536" stroke="currentColor" stroke-width="1.3" fill="none"/></svg>d6<svg class="g" width="11" height="24" viewBox="0 0 11 24"><ellipse cx="5.5" cy="10.107" rx="3.5" ry="5.312" stroke="currentColor" stroke-width="1.75" fill="none"/><path d="M3.3,13.321 L7.9,6.536" stroke="currentColor" stroke-width="1.3" fill="none"/></svg> &lt;_IO_doallocbuf+8<svg class="g" width="11" height="24" viewBox="0 0 11 24"><ellipse cx="5.5" cy="10.107" rx="3.5" ry="5.312" stroke="currentColor" stroke-width="1.75" fill="none"/><path d="M3.3,13.321 L7.9,6.536" stroke="currentColor" stroke-width="1.3" fill="none"/></svg>&gt;    <span class="Y">cmp</span>    <span class="C">eax</span>, <svg class="g" width="11" height="24" viewBox="0 0 11 24"><rect x="0.5" y="10.375" width="10" height="1.25"/></svg><span class="N">1</span></div>
<div class="r" style="left:10px;top:1139px">   <svg class="g" width="11" height="24" viewBox="0 0 11 24"><ellipse cx="5.5" cy="10.107" rx="3.5" ry="5.312" stroke="currentColor" stroke-width="1.75" fill="none"/><path d="M3.3,13.321 L7.9,6.536" stroke="currentColor" stroke-width="1.3" fill="none"/></svg>x7ffff7e2<svg class="g" width="11" height="24" viewBox="0 0 11 24"><ellipse cx="5.5" cy="10.107" rx="3.5" ry="5.312" stroke="currentColor" stroke-width="1.75" fill="none"/><path d="M3.3,13.321 L7.9,6.536" stroke="currentColor" stroke-width="1.3" fill="none"/></svg>d63 &lt;_IO_doallocbuf+83&gt;    <span class="Y">jne</span>    <span class="N">_IO_doallocbuf+137</span>                &lt;<span class="R">_IO_doallocbuf+137</span>&gt;</div>
<div class="r" style="left:10px;top:1187px">   <svg class="g" width="11" height="24" viewBox="0 0 11 24"><ellipse cx="5.5" cy="10.107" rx="3.5" ry="5.312" stroke="currentColor" stroke-width="1.75" fill="none"/><path d="M3.3,13.321 L7.9,6.536" stroke="currentColor" stroke-width="1.3" fill="none"/></svg>x7ffff7e2<svg class="g" width="11" height="24" viewBox="0 0 11 24"><ellipse cx="5.5" cy="10.107" rx="3.5" ry="5.312" stroke="currentColor" stroke-width="1.75" fill="none"/><path d="M3.3,13.321 L7.9,6.536" stroke="currentColor" stroke-width="1.3" fill="none"/></svg>d65 &lt;_IO_doallocbuf+85&gt;    <span class="Y">mov</span>    <span class="C">rdi</span>, <span class="C">qword ptr</span> [<span class="C">rbx</span> + <span class="N"><svg class="g" width="11" height="24" viewBox="0 0 11 24"><ellipse cx="5.5" cy="10.107" rx="3.5" ry="5.312" stroke="currentColor" stroke-width="1.75" fill="none"/><path d="M3.3,13.321 L7.9,6.536" stroke="currentColor" stroke-width="1.3" fill="none"/></svg>x38</span>]</div>
<div class="r" style="left:10px;top:1211px">   <svg class="g" width="11" height="24" viewBox="0 0 11 24"><ellipse cx="5.5" cy="10.107" rx="3.5" ry="5.312" stroke="currentColor" stroke-width="1.75" fill="none"/><path d="M3.3,13.321 L7.9,6.536" stroke="currentColor" stroke-width="1.3" fill="none"/></svg>x7ffff7e2<svg class="g" width="11" height="24" viewBox="0 0 11 24"><ellipse cx="5.5" cy="10.107" rx="3.5" ry="5.312" stroke="currentColor" stroke-width="1.75" fill="none"/><path d="M3.3,13.321 L7.9,6.536" stroke="currentColor" stroke-width="1.3" fill="none"/></svg>d69 &lt;_IO_doallocbuf+89&gt;    <span class="Y">mov</span>    <span class="C">eax</span>, <span class="C">dword ptr</span> [<span class="C">rbx</span>]</div>
<div class="r" style="left:10px;top:1235px">   <svg class="g" width="11" height="24" viewBox="0 0 11 24"><ellipse cx="5.5" cy="10.107" rx="3.5" ry="5.312" stroke="currentColor" stroke-width="1.75" fill="none"/><path d="M3.3,13.321 L7.9,6.536" stroke="currentColor" stroke-width="1.3" fill="none"/></svg>x7ffff7e2<svg class="g" width="11" height="24" viewBox="0 0 11 24"><ellipse cx="5.5" cy="10.107" rx="3.5" ry="5.312" stroke="currentColor" stroke-width="1.75" fill="none"/><path d="M3.3,13.321 L7.9,6.536" stroke="currentColor" stroke-width="1.3" fill="none"/></svg>d6b &lt;_IO_doallocbuf+91&gt;    <span class="Y">lea</span>    <span class="C">rbp</span>, [<span class="C">rbx</span> + <span class="N"><svg class="g" width="11" height="24" viewBox="0 0 11 24"><ellipse cx="5.5" cy="10.107" rx="3.5" ry="5.312" stroke="currentColor" stroke-width="1.75" fill="none"/><path d="M3.3,13.321 L7.9,6.536" stroke="currentColor" stroke-width="1.3" fill="none"/></svg>x84</span>]</div>
<div class="r" style="left:10px;top:1283px"><span class="X">pwndbg&gt;</span></div>
<div class="r" style="left:1275px;top:11px">In file: <svg class="g" width="11" height="24" viewBox="0 0 11 24"><path d="M1.6,17.25 L8.4,4.929" stroke="currentColor" stroke-width="1.5" fill="none"/></svg>mnt<svg class="g" width="11" height="24" viewBox="0 0 11 24"><path d="M1.6,17.25 L8.4,4.929" stroke="currentColor" stroke-width="1.5" fill="none"/></svg>d<svg class="g" width="11" height="24" viewBox="0 0 11 24"><path d="M1.6,17.25 L8.4,4.929" stroke="currentColor" stroke-width="1.5" fill="none"/></svg>PWN<svg class="g" width="11" height="24" viewBox="0 0 11 24"><path d="M1.6,17.25 L8.4,4.929" stroke="currentColor" stroke-width="1.5" fill="none"/></svg>glibc<svg class="g" width="11" height="24" viewBox="0 0 11 24"><rect x="0.5" y="10.375" width="10" height="1.25"/></svg>2.35<svg class="g" width="11" height="24" viewBox="0 0 11 24"><path d="M1.6,17.25 L8.4,4.929" stroke="currentColor" stroke-width="1.5" fill="none"/></svg>libio<svg class="g" width="11" height="24" viewBox="0 0 11 24"><path d="M1.6,17.25 L8.4,4.929" stroke="currentColor" stroke-width="1.5" fill="none"/></svg>libioP.h</div>
<div class="r" style="left:2353px;top:11px"><span class="k">11:46:44 [5<svg class="g" width="11" height="24" viewBox="0 0 11 24"><path d="M1.6,17.25 L8.4,4.929" stroke="currentColor" stroke-width="1.5" fill="none"/></svg>411]</span></div>
<div class="r" style="left:1275px;top:35px">   932</div>
<div class="r" style="left:1275px;top:59px">   933 <span class="M"><svg class="g" width="11" height="24" viewBox="0 0 11 24"><path d="M1.6,17.25 L8.4,4.929" stroke="currentColor" stroke-width="1.5" fill="none"/></svg><svg class="g" width="11" height="24" viewBox="0 0 11 24"><path d="M5.4,4.393 V13.321 M0.9,6.446 L10,11.179 M0.9,11.179 L10,6.446" stroke="currentColor" stroke-width="1.35" fill="none"/></svg> Perform vtable pointer validation.  If validation fails, terminate</span></div>
<div class="r" style="left:1275px;top:83px">   934 <span class="M">   the process.  <svg class="g" width="11" height="24" viewBox="0 0 11 24"><path d="M5.4,4.393 V13.321 M0.9,6.446 L10,11.179 M0.9,11.179 L10,6.446" stroke="currentColor" stroke-width="1.35" fill="none"/></svg><svg class="g" width="11" height="24" viewBox="0 0 11 24"><path d="M1.6,17.25 L8.4,4.929" stroke="currentColor" stroke-width="1.5" fill="none"/></svg></span></div>
<div class="r" style="left:1275px;top:107px">   935 <span class="C">static inline const struct</span> <span class="Y">_IO_jump_t</span> <span class="K"><svg class="g" width="11" height="24" viewBox="0 0 11 24"><path d="M5.4,4.393 V13.321 M0.9,6.446 L10,11.179 M0.9,11.179 L10,6.446" stroke="currentColor" stroke-width="1.35" fill="none"/></svg></span></div>
<div class="r" style="left:1275px;top:131px">   936 IO_validate_vtable (<span class="C">const struct</span> <span class="Y">_IO_jump_t</span> <span class="K"><svg class="g" width="11" height="24" viewBox="0 0 11 24"><path d="M5.4,4.393 V13.321 M0.9,6.446 L10,11.179 M0.9,11.179 L10,6.446" stroke="currentColor" stroke-width="1.35" fill="none"/></svg></span>vtable)</div>
<div class="r" style="left:1275px;top:155px">   937 {</div>
<div class="r" style="left:1275px;top:179px">   938 <span class="M">  <svg class="g" width="11" height="24" viewBox="0 0 11 24"><path d="M1.6,17.25 L8.4,4.929" stroke="currentColor" stroke-width="1.5" fill="none"/></svg><svg class="g" width="11" height="24" viewBox="0 0 11 24"><path d="M5.4,4.393 V13.321 M0.9,6.446 L10,11.179 M0.9,11.179 L10,6.446" stroke="currentColor" stroke-width="1.35" fill="none"/></svg> Fast path: The vtable pointer is within the __libc_IO_vtables</span></div>
<div class="r" style="left:1275px;top:203px">   939 <span class="M">     section.  <svg class="g" width="11" height="24" viewBox="0 0 11 24"><path d="M5.4,4.393 V13.321 M0.9,6.446 L10,11.179 M0.9,11.179 L10,6.446" stroke="currentColor" stroke-width="1.35" fill="none"/></svg><svg class="g" width="11" height="24" viewBox="0 0 11 24"><path d="M1.6,17.25 L8.4,4.929" stroke="currentColor" stroke-width="1.5" fill="none"/></svg></span></div>
<div class="r" style="left:1275px;top:227px">   94<svg class="g" width="11" height="24" viewBox="0 0 11 24"><ellipse cx="5.5" cy="10.107" rx="3.5" ry="5.312" stroke="currentColor" stroke-width="1.75" fill="none"/><path d="M3.3,13.321 L7.9,6.536" stroke="currentColor" stroke-width="1.3" fill="none"/></svg>   <span class="C">uintptr_t</span> section_length <span class="K">=</span> __stop___libc_IO_vtables <span class="K"><svg class="g" width="11" height="24" viewBox="0 0 11 24"><rect x="0.5" y="10.375" width="10" height="1.25"/></svg></span> __start___libc_IO_vtables;</div>
<div class="r" style="left:1275px;top:251px">   941   <span class="C">uintptr_t</span> ptr <span class="K">=</span> (<span class="C">uintptr_t</span>) vtable;</div>
<div class="r" style="left:1275px;top:275px">   942   <span class="C">uintptr_t</span> offset <span class="K">=</span> ptr <span class="K"><svg class="g" width="11" height="24" viewBox="0 0 11 24"><rect x="0.5" y="10.375" width="10" height="1.25"/></svg></span> (<span class="C">uintptr_t</span>) __start___libc_IO_vtables;</div>
<div class="r" style="left:1275px;top:299px">   943   <span class="C">if</span> (__glibc_unlikely (offset <span class="K">&gt;=</span> section_length))</div>
<div class="r" style="left:1275px;top:323px">   944 <span class="M">    <svg class="g" width="11" height="24" viewBox="0 0 11 24"><path d="M1.6,17.25 L8.4,4.929" stroke="currentColor" stroke-width="1.5" fill="none"/></svg><svg class="g" width="11" height="24" viewBox="0 0 11 24"><path d="M5.4,4.393 V13.321 M0.9,6.446 L10,11.179 M0.9,11.179 L10,6.446" stroke="currentColor" stroke-width="1.35" fill="none"/></svg> The vtable pointer is not in the expected section.  Use the</span></div>
<div class="r" style="left:1275px;top:347px">   945 <span class="M">       slow path, which will terminate the process if necessary.  <svg class="g" width="11" height="24" viewBox="0 0 11 24"><path d="M5.4,4.393 V13.321 M0.9,6.446 L10,11.179 M0.9,11.179 L10,6.446" stroke="currentColor" stroke-width="1.35" fill="none"/></svg><svg class="g" width="11" height="24" viewBox="0 0 11 24"><path d="M1.6,17.25 L8.4,4.929" stroke="currentColor" stroke-width="1.5" fill="none"/></svg></span></div>
<div class="r" style="left:1275px;top:371px">   946     _IO_vtable_check ();</div>
<div class="r" style="left:1275px;top:395px"> <span class="G"><svg class="g" width="11" height="24" viewBox="0 0 11 24"><polygon points="0,8.679 11,11.982 0,15.286"/></svg> 947</span>   <span class="C">return</span> vtable;</div>
<div class="r" style="left:1275px;top:419px">   948 }</div>
<div class="r" style="left:1275px;top:443px">   949</div>
<div class="r" style="left:1275px;top:467px">   95<svg class="g" width="11" height="24" viewBox="0 0 11 24"><ellipse cx="5.5" cy="10.107" rx="3.5" ry="5.312" stroke="currentColor" stroke-width="1.75" fill="none"/><path d="M3.3,13.321 L7.9,6.536" stroke="currentColor" stroke-width="1.3" fill="none"/></svg> <span class="M"><svg class="g" width="11" height="24" viewBox="0 0 11 24"><path d="M1.6,17.25 L8.4,4.929" stroke="currentColor" stroke-width="1.5" fill="none"/></svg><svg class="g" width="11" height="24" viewBox="0 0 11 24"><path d="M5.4,4.393 V13.321 M0.9,6.446 L10,11.179 M0.9,11.179 L10,6.446" stroke="currentColor" stroke-width="1.35" fill="none"/></svg> Character set conversion.  <svg class="g" width="11" height="24" viewBox="0 0 11 24"><path d="M5.4,4.393 V13.321 M0.9,6.446 L10,11.179 M0.9,11.179 L10,6.446" stroke="currentColor" stroke-width="1.35" fill="none"/></svg><svg class="g" width="11" height="24" viewBox="0 0 11 24"><path d="M1.6,17.25 L8.4,4.929" stroke="currentColor" stroke-width="1.5" fill="none"/></svg></span></div>
<div class="r" style="left:1275px;top:491px">   951</div>
<div class="r" style="left:1275px;top:515px">   952 <span class="C">enum</span> __codecvt_result</div>
<div class="r" style="left:1275px;top:539px">   953 {</div>
<div class="r" style="left:1275px;top:563px">   954   __codecvt_ok,</div>
<div class="r" style="left:1275px;top:587px">   955   __codecvt_partial,</div>
<div class="r" style="left:1275px;top:611px">   956   __codecvt_error,</div>
<div class="r" style="left:1275px;top:635px">   957   __codecvt_noconv</div>
<div class="r" style="left:1275px;top:683px"> <svg class="g" width="11" height="24" viewBox="0 0 11 24"><polygon points="0,8.679 11,11.982 0,15.286"/></svg> <svg class="g" width="11" height="24" viewBox="0 0 11 24"><ellipse cx="5.5" cy="10.107" rx="3.5" ry="5.312" stroke="currentColor" stroke-width="1.75" fill="none"/><path d="M3.3,13.321 L7.9,6.536" stroke="currentColor" stroke-width="1.3" fill="none"/></svg>   <svg class="g" width="11" height="24" viewBox="0 0 11 24"><ellipse cx="5.5" cy="10.107" rx="3.5" ry="5.312" stroke="currentColor" stroke-width="1.75" fill="none"/><path d="M3.3,13.321 L7.9,6.536" stroke="currentColor" stroke-width="1.3" fill="none"/></svg>x7ffff7e2<svg class="g" width="11" height="24" viewBox="0 0 11 24"><ellipse cx="5.5" cy="10.107" rx="3.5" ry="5.312" stroke="currentColor" stroke-width="1.75" fill="none"/><path d="M3.3,13.321 L7.9,6.536" stroke="currentColor" stroke-width="1.3" fill="none"/></svg>d5d _IO_doallocbuf+77</div>
<div class="r" style="left:1275px;top:707px">   1   <svg class="g" width="11" height="24" viewBox="0 0 11 24"><ellipse cx="5.5" cy="10.107" rx="3.5" ry="5.312" stroke="currentColor" stroke-width="1.75" fill="none"/><path d="M3.3,13.321 L7.9,6.536" stroke="currentColor" stroke-width="1.3" fill="none"/></svg>x7ffff7e1ffe<svg class="g" width="11" height="24" viewBox="0 0 11 24"><ellipse cx="5.5" cy="10.107" rx="3.5" ry="5.312" stroke="currentColor" stroke-width="1.75" fill="none"/><path d="M3.3,13.321 L7.9,6.536" stroke="currentColor" stroke-width="1.3" fill="none"/></svg> _IO_file_overflow+416</div>
<div class="r" style="left:1275px;top:731px">   2   <svg class="g" width="11" height="24" viewBox="0 0 11 24"><ellipse cx="5.5" cy="10.107" rx="3.5" ry="5.312" stroke="currentColor" stroke-width="1.75" fill="none"/><path d="M3.3,13.321 L7.9,6.536" stroke="currentColor" stroke-width="1.3" fill="none"/></svg>x7ffff7e21a42 _IO_flush_all_lockp+226</div>
<div class="r" style="left:1275px;top:755px">   3   <svg class="g" width="11" height="24" viewBox="0 0 11 24"><ellipse cx="5.5" cy="10.107" rx="3.5" ry="5.312" stroke="currentColor" stroke-width="1.75" fill="none"/><path d="M3.3,13.321 L7.9,6.536" stroke="currentColor" stroke-width="1.3" fill="none"/></svg>x7ffff7e21bfe _IO_cleanup+46</div>
<div class="r" style="left:1275px;top:779px">   4   <svg class="g" width="11" height="24" viewBox="0 0 11 24"><ellipse cx="5.5" cy="10.107" rx="3.5" ry="5.312" stroke="currentColor" stroke-width="1.75" fill="none"/><path d="M3.3,13.321 L7.9,6.536" stroke="currentColor" stroke-width="1.3" fill="none"/></svg>x7ffff7dd8542 __run_exit_handlers+434</div>
<div class="r" style="left:1275px;top:803px">   5   <svg class="g" width="11" height="24" viewBox="0 0 11 24"><ellipse cx="5.5" cy="10.107" rx="3.5" ry="5.312" stroke="currentColor" stroke-width="1.75" fill="none"/><path d="M3.3,13.321 L7.9,6.536" stroke="currentColor" stroke-width="1.3" fill="none"/></svg>x7ffff7dd861<svg class="g" width="11" height="24" viewBox="0 0 11 24"><ellipse cx="5.5" cy="10.107" rx="3.5" ry="5.312" stroke="currentColor" stroke-width="1.75" fill="none"/><path d="M3.3,13.321 L7.9,6.536" stroke="currentColor" stroke-width="1.3" fill="none"/></svg> on_exit</div>
<div class="r" style="left:1275px;top:827px">   6   <svg class="g" width="11" height="24" viewBox="0 0 11 24"><ellipse cx="5.5" cy="10.107" rx="3.5" ry="5.312" stroke="currentColor" stroke-width="1.75" fill="none"/><path d="M3.3,13.321 L7.9,6.536" stroke="currentColor" stroke-width="1.3" fill="none"/></svg>x5555555552<svg class="g" width="11" height="24" viewBox="0 0 11 24"><ellipse cx="5.5" cy="10.107" rx="3.5" ry="5.312" stroke="currentColor" stroke-width="1.75" fill="none"/><path d="M3.3,13.321 L7.9,6.536" stroke="currentColor" stroke-width="1.3" fill="none"/></svg>9</div>
<div class="r" style="left:1275px;top:851px">   7   <svg class="g" width="11" height="24" viewBox="0 0 11 24"><ellipse cx="5.5" cy="10.107" rx="3.5" ry="5.312" stroke="currentColor" stroke-width="1.75" fill="none"/><path d="M3.3,13.321 L7.9,6.536" stroke="currentColor" stroke-width="1.3" fill="none"/></svg>x7ffff7dbcd9<svg class="g" width="11" height="24" viewBox="0 0 11 24"><ellipse cx="5.5" cy="10.107" rx="3.5" ry="5.312" stroke="currentColor" stroke-width="1.75" fill="none"/><path d="M3.3,13.321 L7.9,6.536" stroke="currentColor" stroke-width="1.3" fill="none"/></svg> __libc_start_call_main+128</div>
<div class="r" style="left:1275px;top:1019px"><svg class="g" width="11" height="24" viewBox="0 0 11 24"><ellipse cx="5.5" cy="10.107" rx="3.5" ry="5.312" stroke="currentColor" stroke-width="1.75" fill="none"/><path d="M3.3,13.321 L7.9,6.536" stroke="currentColor" stroke-width="1.3" fill="none"/></svg><svg class="g" width="11" height="24" viewBox="0 0 11 24"><ellipse cx="5.5" cy="10.107" rx="3.5" ry="5.312" stroke="currentColor" stroke-width="1.75" fill="none"/><path d="M3.3,13.321 L7.9,6.536" stroke="currentColor" stroke-width="1.3" fill="none"/></svg>:<svg class="g" width="11" height="24" viewBox="0 0 11 24"><ellipse cx="5.5" cy="10.107" rx="3.5" ry="5.312" stroke="currentColor" stroke-width="1.75" fill="none"/><path d="M3.3,13.321 L7.9,6.536" stroke="currentColor" stroke-width="1.3" fill="none"/></svg><svg class="g" width="11" height="24" viewBox="0 0 11 24"><ellipse cx="5.5" cy="10.107" rx="3.5" ry="5.312" stroke="currentColor" stroke-width="1.75" fill="none"/><path d="M3.3,13.321 L7.9,6.536" stroke="currentColor" stroke-width="1.3" fill="none"/></svg><svg class="g" width="11" height="24" viewBox="0 0 11 24"><ellipse cx="5.5" cy="10.107" rx="3.5" ry="5.312" stroke="currentColor" stroke-width="1.75" fill="none"/><path d="M3.3,13.321 L7.9,6.536" stroke="currentColor" stroke-width="1.3" fill="none"/></svg><svg class="g" width="11" height="24" viewBox="0 0 11 24"><ellipse cx="5.5" cy="10.107" rx="3.5" ry="5.312" stroke="currentColor" stroke-width="1.75" fill="none"/><path d="M3.3,13.321 L7.9,6.536" stroke="currentColor" stroke-width="1.3" fill="none"/></svg><svg class="g" width="11" height="24" viewBox="0 0 11 24"><rect x="5" y="-0.071" width="1" height="21.429"/></svg> rsp <span class="O"><svg class="g" width="11" height="24" viewBox="0 0 11 24"><ellipse cx="5.5" cy="10.107" rx="3.5" ry="5.312" stroke="currentColor" stroke-width="1.75" fill="none"/><path d="M3.3,13.321 L7.9,6.536" stroke="currentColor" stroke-width="1.3" fill="none"/></svg>x7fffffffe39<svg class="g" width="11" height="24" viewBox="0 0 11 24"><ellipse cx="5.5" cy="10.107" rx="3.5" ry="5.312" stroke="currentColor" stroke-width="1.75" fill="none"/><path d="M3.3,13.321 L7.9,6.536" stroke="currentColor" stroke-width="1.3" fill="none"/></svg></span> <svg class="g" width="11" height="24" viewBox="0 0 11 24"><polygon points="1.5,11.982 9,8.857 9,15.107"/></svg><svg class="g" width="11" height="24" viewBox="0 0 11 24"><rect x="0" y="10.464" width="11" height="1.25"/></svg> <svg class="g" width="11" height="24" viewBox="0 0 11 24"><ellipse cx="5.5" cy="10.107" rx="3.5" ry="5.312" stroke="currentColor" stroke-width="1.75" fill="none"/><path d="M3.3,13.321 L7.9,6.536" stroke="currentColor" stroke-width="1.3" fill="none"/></svg>xffffffff</div>
<div class="r" style="left:1275px;top:1043px"><svg class="g" width="11" height="24" viewBox="0 0 11 24"><ellipse cx="5.5" cy="10.107" rx="3.5" ry="5.312" stroke="currentColor" stroke-width="1.75" fill="none"/><path d="M3.3,13.321 L7.9,6.536" stroke="currentColor" stroke-width="1.3" fill="none"/></svg>1:<svg class="g" width="11" height="24" viewBox="0 0 11 24"><ellipse cx="5.5" cy="10.107" rx="3.5" ry="5.312" stroke="currentColor" stroke-width="1.75" fill="none"/><path d="M3.3,13.321 L7.9,6.536" stroke="currentColor" stroke-width="1.3" fill="none"/></svg><svg class="g" width="11" height="24" viewBox="0 0 11 24"><ellipse cx="5.5" cy="10.107" rx="3.5" ry="5.312" stroke="currentColor" stroke-width="1.75" fill="none"/><path d="M3.3,13.321 L7.9,6.536" stroke="currentColor" stroke-width="1.3" fill="none"/></svg><svg class="g" width="11" height="24" viewBox="0 0 11 24"><ellipse cx="5.5" cy="10.107" rx="3.5" ry="5.312" stroke="currentColor" stroke-width="1.75" fill="none"/><path d="M3.3,13.321 L7.9,6.536" stroke="currentColor" stroke-width="1.3" fill="none"/></svg>8<svg class="g" width="11" height="24" viewBox="0 0 11 24"><rect x="5" y="-0.071" width="1" height="21.429"/></svg>     <span class="O"><svg class="g" width="11" height="24" viewBox="0 0 11 24"><ellipse cx="5.5" cy="10.107" rx="3.5" ry="5.312" stroke="currentColor" stroke-width="1.75" fill="none"/><path d="M3.3,13.321 L7.9,6.536" stroke="currentColor" stroke-width="1.3" fill="none"/></svg>x7fffffffe398</span> <svg class="g" width="11" height="24" viewBox="0 0 11 24"><rect x="0" y="10.464" width="11" height="1.25"/></svg><svg class="g" width="11" height="24" viewBox="0 0 11 24"><polygon points="1.4,8.857 9.2,11.893 1.4,14.929"/></svg> <span class="P"><svg class="g" width="11" height="24" viewBox="0 0 11 24"><ellipse cx="5.5" cy="10.107" rx="3.5" ry="5.312" stroke="currentColor" stroke-width="1.75" fill="none"/><path d="M3.3,13.321 L7.9,6.536" stroke="currentColor" stroke-width="1.3" fill="none"/></svg>x7ffff7facaa<svg class="g" width="11" height="24" viewBox="0 0 11 24"><ellipse cx="5.5" cy="10.107" rx="3.5" ry="5.312" stroke="currentColor" stroke-width="1.75" fill="none"/><path d="M3.3,13.321 L7.9,6.536" stroke="currentColor" stroke-width="1.3" fill="none"/></svg> (_IO_2_1_stdin_)</span> <svg class="g" width="11" height="24" viewBox="0 0 11 24"><polygon points="1.5,11.982 9,8.857 9,15.107"/></svg><svg class="g" width="11" height="24" viewBox="0 0 11 24"><rect x="0" y="10.464" width="11" height="1.25"/></svg> <svg class="g" width="11" height="24" viewBox="0 0 11 24"><ellipse cx="5.5" cy="10.107" rx="3.5" ry="5.312" stroke="currentColor" stroke-width="1.75" fill="none"/><path d="M3.3,13.321 L7.9,6.536" stroke="currentColor" stroke-width="1.3" fill="none"/></svg>x68732<svg class="g" width="11" height="24" viewBox="0 0 11 24"><ellipse cx="5.5" cy="10.107" rx="3.5" ry="5.312" stroke="currentColor" stroke-width="1.75" fill="none"/><path d="M3.3,13.321 L7.9,6.536" stroke="currentColor" stroke-width="1.3" fill="none"/></svg>2<svg class="g" width="11" height="24" viewBox="0 0 11 24"><ellipse cx="5.5" cy="10.107" rx="3.5" ry="5.312" stroke="currentColor" stroke-width="1.75" fill="none"/><path d="M3.3,13.321 L7.9,6.536" stroke="currentColor" stroke-width="1.3" fill="none"/></svg> <svg class="g" width="11" height="24" viewBox="0 0 11 24"><path d="M1.6,17.25 L8.4,4.929" stroke="currentColor" stroke-width="1.5" fill="none"/></svg><svg class="g" width="11" height="24" viewBox="0 0 11 24"><path d="M5.4,4.393 V13.321 M0.9,6.446 L10,11.179 M0.9,11.179 L10,6.446" stroke="currentColor" stroke-width="1.35" fill="none"/></svg> '  sh' <svg class="g" width="11" height="24" viewBox="0 0 11 24"><path d="M5.4,4.393 V13.321 M0.9,6.446 L10,11.179 M0.9,11.179 L10,6.446" stroke="currentColor" stroke-width="1.35" fill="none"/></svg><svg class="g" width="11" height="24" viewBox="0 0 11 24"><path d="M1.6,17.25 L8.4,4.929" stroke="currentColor" stroke-width="1.5" fill="none"/></svg></div>
<div class="r" style="left:1275px;top:1067px"><svg class="g" width="11" height="24" viewBox="0 0 11 24"><ellipse cx="5.5" cy="10.107" rx="3.5" ry="5.312" stroke="currentColor" stroke-width="1.75" fill="none"/><path d="M3.3,13.321 L7.9,6.536" stroke="currentColor" stroke-width="1.3" fill="none"/></svg>2:<svg class="g" width="11" height="24" viewBox="0 0 11 24"><ellipse cx="5.5" cy="10.107" rx="3.5" ry="5.312" stroke="currentColor" stroke-width="1.75" fill="none"/><path d="M3.3,13.321 L7.9,6.536" stroke="currentColor" stroke-width="1.3" fill="none"/></svg><svg class="g" width="11" height="24" viewBox="0 0 11 24"><ellipse cx="5.5" cy="10.107" rx="3.5" ry="5.312" stroke="currentColor" stroke-width="1.75" fill="none"/><path d="M3.3,13.321 L7.9,6.536" stroke="currentColor" stroke-width="1.3" fill="none"/></svg>1<svg class="g" width="11" height="24" viewBox="0 0 11 24"><ellipse cx="5.5" cy="10.107" rx="3.5" ry="5.312" stroke="currentColor" stroke-width="1.75" fill="none"/><path d="M3.3,13.321 L7.9,6.536" stroke="currentColor" stroke-width="1.3" fill="none"/></svg><svg class="g" width="11" height="24" viewBox="0 0 11 24"><rect x="5" y="-0.071" width="1" height="21.429"/></svg>     <span class="O"><svg class="g" width="11" height="24" viewBox="0 0 11 24"><ellipse cx="5.5" cy="10.107" rx="3.5" ry="5.312" stroke="currentColor" stroke-width="1.75" fill="none"/><path d="M3.3,13.321 L7.9,6.536" stroke="currentColor" stroke-width="1.3" fill="none"/></svg>x7fffffffe3a<svg class="g" width="11" height="24" viewBox="0 0 11 24"><ellipse cx="5.5" cy="10.107" rx="3.5" ry="5.312" stroke="currentColor" stroke-width="1.75" fill="none"/><path d="M3.3,13.321 L7.9,6.536" stroke="currentColor" stroke-width="1.3" fill="none"/></svg></span> <svg class="g" width="11" height="24" viewBox="0 0 11 24"><polygon points="1.5,11.982 9,8.857 9,15.107"/></svg><svg class="g" width="11" height="24" viewBox="0 0 11 24"><rect x="0" y="10.464" width="11" height="1.25"/></svg> <svg class="g" width="11" height="24" viewBox="0 0 11 24"><ellipse cx="5.5" cy="10.107" rx="3.5" ry="5.312" stroke="currentColor" stroke-width="1.75" fill="none"/><path d="M3.3,13.321 L7.9,6.536" stroke="currentColor" stroke-width="1.3" fill="none"/></svg>x<svg class="g" width="11" height="24" viewBox="0 0 11 24"><ellipse cx="5.5" cy="10.107" rx="3.5" ry="5.312" stroke="currentColor" stroke-width="1.75" fill="none"/><path d="M3.3,13.321 L7.9,6.536" stroke="currentColor" stroke-width="1.3" fill="none"/></svg></div>
<div class="r" style="left:1275px;top:1091px"><svg class="g" width="11" height="24" viewBox="0 0 11 24"><ellipse cx="5.5" cy="10.107" rx="3.5" ry="5.312" stroke="currentColor" stroke-width="1.75" fill="none"/><path d="M3.3,13.321 L7.9,6.536" stroke="currentColor" stroke-width="1.3" fill="none"/></svg>3:<svg class="g" width="11" height="24" viewBox="0 0 11 24"><ellipse cx="5.5" cy="10.107" rx="3.5" ry="5.312" stroke="currentColor" stroke-width="1.75" fill="none"/><path d="M3.3,13.321 L7.9,6.536" stroke="currentColor" stroke-width="1.3" fill="none"/></svg><svg class="g" width="11" height="24" viewBox="0 0 11 24"><ellipse cx="5.5" cy="10.107" rx="3.5" ry="5.312" stroke="currentColor" stroke-width="1.75" fill="none"/><path d="M3.3,13.321 L7.9,6.536" stroke="currentColor" stroke-width="1.3" fill="none"/></svg>18<svg class="g" width="11" height="24" viewBox="0 0 11 24"><rect x="5" y="-0.071" width="1" height="21.429"/></svg>     <span class="O"><svg class="g" width="11" height="24" viewBox="0 0 11 24"><ellipse cx="5.5" cy="10.107" rx="3.5" ry="5.312" stroke="currentColor" stroke-width="1.75" fill="none"/><path d="M3.3,13.321 L7.9,6.536" stroke="currentColor" stroke-width="1.3" fill="none"/></svg>x7fffffffe3a8</span> <svg class="g" width="11" height="24" viewBox="0 0 11 24"><rect x="0" y="10.464" width="11" height="1.25"/></svg><svg class="g" width="11" height="24" viewBox="0 0 11 24"><polygon points="1.4,8.857 9.2,11.893 1.4,14.929"/></svg> <span class="R"><svg class="g" width="11" height="24" viewBox="0 0 11 24"><ellipse cx="5.5" cy="10.107" rx="3.5" ry="5.312" stroke="currentColor" stroke-width="1.75" fill="none"/><path d="M3.3,13.321 L7.9,6.536" stroke="currentColor" stroke-width="1.3" fill="none"/></svg>x7ffff7e1ffe<svg class="g" width="11" height="24" viewBox="0 0 11 24"><ellipse cx="5.5" cy="10.107" rx="3.5" ry="5.312" stroke="currentColor" stroke-width="1.75" fill="none"/><path d="M3.3,13.321 L7.9,6.536" stroke="currentColor" stroke-width="1.3" fill="none"/></svg> (_IO_file_overflow+416)</span> <svg class="g" width="11" height="24" viewBox="0 0 11 24"><polygon points="1.5,11.982 9,8.857 9,15.107"/></svg><svg class="g" width="11" height="24" viewBox="0 0 11 24"><rect x="0" y="10.464" width="11" height="1.25"/></svg> <span class="Y">mov</span> <span class="C">rdx</span>, <span class="C">qword ptr</span> [<span class="C">rbp</span> + <span class="N"><svg class="g" width="11" height="24" viewBox="0 0 11 24"><ellipse cx="5.5" cy="10.107" rx="3.5" ry="5.312" stroke="currentColor" stroke-width="1.75" fill="none"/><path d="M3.3,13.321 L7.9,6.536" stroke="currentColor" stroke-width="1.3" fill="none"/></svg>x38</span>]</div>
<div class="r" style="left:1275px;top:1115px"><svg class="g" width="11" height="24" viewBox="0 0 11 24"><ellipse cx="5.5" cy="10.107" rx="3.5" ry="5.312" stroke="currentColor" stroke-width="1.75" fill="none"/><path d="M3.3,13.321 L7.9,6.536" stroke="currentColor" stroke-width="1.3" fill="none"/></svg>4:<svg class="g" width="11" height="24" viewBox="0 0 11 24"><ellipse cx="5.5" cy="10.107" rx="3.5" ry="5.312" stroke="currentColor" stroke-width="1.75" fill="none"/><path d="M3.3,13.321 L7.9,6.536" stroke="currentColor" stroke-width="1.3" fill="none"/></svg><svg class="g" width="11" height="24" viewBox="0 0 11 24"><ellipse cx="5.5" cy="10.107" rx="3.5" ry="5.312" stroke="currentColor" stroke-width="1.75" fill="none"/><path d="M3.3,13.321 L7.9,6.536" stroke="currentColor" stroke-width="1.3" fill="none"/></svg>2<svg class="g" width="11" height="24" viewBox="0 0 11 24"><ellipse cx="5.5" cy="10.107" rx="3.5" ry="5.312" stroke="currentColor" stroke-width="1.75" fill="none"/><path d="M3.3,13.321 L7.9,6.536" stroke="currentColor" stroke-width="1.3" fill="none"/></svg><svg class="g" width="11" height="24" viewBox="0 0 11 24"><rect x="5" y="-0.071" width="1" height="21.429"/></svg>     <span class="O"><svg class="g" width="11" height="24" viewBox="0 0 11 24"><ellipse cx="5.5" cy="10.107" rx="3.5" ry="5.312" stroke="currentColor" stroke-width="1.75" fill="none"/><path d="M3.3,13.321 L7.9,6.536" stroke="currentColor" stroke-width="1.3" fill="none"/></svg>x7fffffffe3b<svg class="g" width="11" height="24" viewBox="0 0 11 24"><ellipse cx="5.5" cy="10.107" rx="3.5" ry="5.312" stroke="currentColor" stroke-width="1.75" fill="none"/><path d="M3.3,13.321 L7.9,6.536" stroke="currentColor" stroke-width="1.3" fill="none"/></svg></span> <svg class="g" width="11" height="24" viewBox="0 0 11 24"><polygon points="1.5,11.982 9,8.857 9,15.107"/></svg><svg class="g" width="11" height="24" viewBox="0 0 11 24"><rect x="0" y="10.464" width="11" height="1.25"/></svg> <svg class="g" width="11" height="24" viewBox="0 0 11 24"><ellipse cx="5.5" cy="10.107" rx="3.5" ry="5.312" stroke="currentColor" stroke-width="1.75" fill="none"/><path d="M3.3,13.321 L7.9,6.536" stroke="currentColor" stroke-width="1.3" fill="none"/></svg>xd68 <svg class="g" width="11" height="24" viewBox="0 0 11 24"><path d="M1.6,17.25 L8.4,4.929" stroke="currentColor" stroke-width="1.5" fill="none"/></svg><svg class="g" width="11" height="24" viewBox="0 0 11 24"><path d="M5.4,4.393 V13.321 M0.9,6.446 L10,11.179 M0.9,11.179 L10,6.446" stroke="currentColor" stroke-width="1.35" fill="none"/></svg> 'h\r' <svg class="g" width="11" height="24" viewBox="0 0 11 24"><path d="M5.4,4.393 V13.321 M0.9,6.446 L10,11.179 M0.9,11.179 L10,6.446" stroke="currentColor" stroke-width="1.35" fill="none"/></svg><svg class="g" width="11" height="24" viewBox="0 0 11 24"><path d="M1.6,17.25 L8.4,4.929" stroke="currentColor" stroke-width="1.5" fill="none"/></svg></div>
<div class="r" style="left:1275px;top:1139px"><svg class="g" width="11" height="24" viewBox="0 0 11 24"><ellipse cx="5.5" cy="10.107" rx="3.5" ry="5.312" stroke="currentColor" stroke-width="1.75" fill="none"/><path d="M3.3,13.321 L7.9,6.536" stroke="currentColor" stroke-width="1.3" fill="none"/></svg>5:<svg class="g" width="11" height="24" viewBox="0 0 11 24"><ellipse cx="5.5" cy="10.107" rx="3.5" ry="5.312" stroke="currentColor" stroke-width="1.75" fill="none"/><path d="M3.3,13.321 L7.9,6.536" stroke="currentColor" stroke-width="1.3" fill="none"/></svg><svg class="g" width="11" height="24" viewBox="0 0 11 24"><ellipse cx="5.5" cy="10.107" rx="3.5" ry="5.312" stroke="currentColor" stroke-width="1.75" fill="none"/><path d="M3.3,13.321 L7.9,6.536" stroke="currentColor" stroke-width="1.3" fill="none"/></svg>28<svg class="g" width="11" height="24" viewBox="0 0 11 24"><rect x="5" y="-0.071" width="1" height="21.429"/></svg>     <span class="O"><svg class="g" width="11" height="24" viewBox="0 0 11 24"><ellipse cx="5.5" cy="10.107" rx="3.5" ry="5.312" stroke="currentColor" stroke-width="1.75" fill="none"/><path d="M3.3,13.321 L7.9,6.536" stroke="currentColor" stroke-width="1.3" fill="none"/></svg>x7fffffffe3b8</span> <svg class="g" width="11" height="24" viewBox="0 0 11 24"><rect x="0" y="10.464" width="11" height="1.25"/></svg><svg class="g" width="11" height="24" viewBox="0 0 11 24"><polygon points="1.4,8.857 9.2,11.893 1.4,14.929"/></svg> <svg class="g" width="11" height="24" viewBox="0 0 11 24"><ellipse cx="5.5" cy="10.107" rx="3.5" ry="5.312" stroke="currentColor" stroke-width="1.75" fill="none"/><path d="M3.3,13.321 L7.9,6.536" stroke="currentColor" stroke-width="1.3" fill="none"/></svg>x7ffff7fa8a<svg class="g" width="11" height="24" viewBox="0 0 11 24"><ellipse cx="5.5" cy="10.107" rx="3.5" ry="5.312" stroke="currentColor" stroke-width="1.75" fill="none"/><path d="M3.3,13.321 L7.9,6.536" stroke="currentColor" stroke-width="1.3" fill="none"/></svg><svg class="g" width="11" height="24" viewBox="0 0 11 24"><ellipse cx="5.5" cy="10.107" rx="3.5" ry="5.312" stroke="currentColor" stroke-width="1.75" fill="none"/><path d="M3.3,13.321 L7.9,6.536" stroke="currentColor" stroke-width="1.3" fill="none"/></svg> (_IO_helper_jumps) <svg class="g" width="11" height="24" viewBox="0 0 11 24"><polygon points="1.5,11.982 9,8.857 9,15.107"/></svg><svg class="g" width="11" height="24" viewBox="0 0 11 24"><rect x="0" y="10.464" width="11" height="1.25"/></svg> <svg class="g" width="11" height="24" viewBox="0 0 11 24"><ellipse cx="5.5" cy="10.107" rx="3.5" ry="5.312" stroke="currentColor" stroke-width="1.75" fill="none"/><path d="M3.3,13.321 L7.9,6.536" stroke="currentColor" stroke-width="1.3" fill="none"/></svg>x<svg class="g" width="11" height="24" viewBox="0 0 11 24"><ellipse cx="5.5" cy="10.107" rx="3.5" ry="5.312" stroke="currentColor" stroke-width="1.75" fill="none"/><path d="M3.3,13.321 L7.9,6.536" stroke="currentColor" stroke-width="1.3" fill="none"/></svg></div>
<div class="r" style="left:1275px;top:1163px"><svg class="g" width="11" height="24" viewBox="0 0 11 24"><ellipse cx="5.5" cy="10.107" rx="3.5" ry="5.312" stroke="currentColor" stroke-width="1.75" fill="none"/><path d="M3.3,13.321 L7.9,6.536" stroke="currentColor" stroke-width="1.3" fill="none"/></svg>6:<svg class="g" width="11" height="24" viewBox="0 0 11 24"><ellipse cx="5.5" cy="10.107" rx="3.5" ry="5.312" stroke="currentColor" stroke-width="1.75" fill="none"/><path d="M3.3,13.321 L7.9,6.536" stroke="currentColor" stroke-width="1.3" fill="none"/></svg><svg class="g" width="11" height="24" viewBox="0 0 11 24"><ellipse cx="5.5" cy="10.107" rx="3.5" ry="5.312" stroke="currentColor" stroke-width="1.75" fill="none"/><path d="M3.3,13.321 L7.9,6.536" stroke="currentColor" stroke-width="1.3" fill="none"/></svg>3<svg class="g" width="11" height="24" viewBox="0 0 11 24"><ellipse cx="5.5" cy="10.107" rx="3.5" ry="5.312" stroke="currentColor" stroke-width="1.75" fill="none"/><path d="M3.3,13.321 L7.9,6.536" stroke="currentColor" stroke-width="1.3" fill="none"/></svg><svg class="g" width="11" height="24" viewBox="0 0 11 24"><rect x="5" y="-0.071" width="1" height="21.429"/></svg>     <span class="O"><svg class="g" width="11" height="24" viewBox="0 0 11 24"><ellipse cx="5.5" cy="10.107" rx="3.5" ry="5.312" stroke="currentColor" stroke-width="1.75" fill="none"/><path d="M3.3,13.321 L7.9,6.536" stroke="currentColor" stroke-width="1.3" fill="none"/></svg>x7fffffffe3c<svg class="g" width="11" height="24" viewBox="0 0 11 24"><ellipse cx="5.5" cy="10.107" rx="3.5" ry="5.312" stroke="currentColor" stroke-width="1.75" fill="none"/><path d="M3.3,13.321 L7.9,6.536" stroke="currentColor" stroke-width="1.3" fill="none"/></svg></span> <svg class="g" width="11" height="24" viewBox="0 0 11 24"><polygon points="1.5,11.982 9,8.857 9,15.107"/></svg><svg class="g" width="11" height="24" viewBox="0 0 11 24"><rect x="0" y="10.464" width="11" height="1.25"/></svg> <svg class="g" width="11" height="24" viewBox="0 0 11 24"><ellipse cx="5.5" cy="10.107" rx="3.5" ry="5.312" stroke="currentColor" stroke-width="1.75" fill="none"/><path d="M3.3,13.321 L7.9,6.536" stroke="currentColor" stroke-width="1.3" fill="none"/></svg>x<svg class="g" width="11" height="24" viewBox="0 0 11 24"><ellipse cx="5.5" cy="10.107" rx="3.5" ry="5.312" stroke="currentColor" stroke-width="1.75" fill="none"/><path d="M3.3,13.321 L7.9,6.536" stroke="currentColor" stroke-width="1.3" fill="none"/></svg></div>
<div class="r" style="left:1275px;top:1187px"><svg class="g" width="11" height="24" viewBox="0 0 11 24"><ellipse cx="5.5" cy="10.107" rx="3.5" ry="5.312" stroke="currentColor" stroke-width="1.75" fill="none"/><path d="M3.3,13.321 L7.9,6.536" stroke="currentColor" stroke-width="1.3" fill="none"/></svg>7:<svg class="g" width="11" height="24" viewBox="0 0 11 24"><ellipse cx="5.5" cy="10.107" rx="3.5" ry="5.312" stroke="currentColor" stroke-width="1.75" fill="none"/><path d="M3.3,13.321 L7.9,6.536" stroke="currentColor" stroke-width="1.3" fill="none"/></svg><svg class="g" width="11" height="24" viewBox="0 0 11 24"><ellipse cx="5.5" cy="10.107" rx="3.5" ry="5.312" stroke="currentColor" stroke-width="1.75" fill="none"/><path d="M3.3,13.321 L7.9,6.536" stroke="currentColor" stroke-width="1.3" fill="none"/></svg>38<svg class="g" width="11" height="24" viewBox="0 0 11 24"><rect x="5" y="-0.071" width="1" height="21.429"/></svg>     <span class="O"><svg class="g" width="11" height="24" viewBox="0 0 11 24"><ellipse cx="5.5" cy="10.107" rx="3.5" ry="5.312" stroke="currentColor" stroke-width="1.75" fill="none"/><path d="M3.3,13.321 L7.9,6.536" stroke="currentColor" stroke-width="1.3" fill="none"/></svg>x7fffffffe3c8</span> <svg class="g" width="11" height="24" viewBox="0 0 11 24"><rect x="0" y="10.464" width="11" height="1.25"/></svg><svg class="g" width="11" height="24" viewBox="0 0 11 24"><polygon points="1.4,8.857 9.2,11.893 1.4,14.929"/></svg> <span class="R"><svg class="g" width="11" height="24" viewBox="0 0 11 24"><ellipse cx="5.5" cy="10.107" rx="3.5" ry="5.312" stroke="currentColor" stroke-width="1.75" fill="none"/><path d="M3.3,13.321 L7.9,6.536" stroke="currentColor" stroke-width="1.3" fill="none"/></svg>x7ffff7e21a42 (_IO_flush_all_lockp+226)</span> <svg class="g" width="11" height="24" viewBox="0 0 11 24"><polygon points="1.5,11.982 9,8.857 9,15.107"/></svg><svg class="g" width="11" height="24" viewBox="0 0 11 24"><rect x="0" y="10.464" width="11" height="1.25"/></svg> <span class="Y">cmp</span> <span class="C">eax</span>, <svg class="g" width="11" height="24" viewBox="0 0 11 24"><rect x="0.5" y="10.375" width="10" height="1.25"/></svg><span class="N">1</span></div>
</body></html>
